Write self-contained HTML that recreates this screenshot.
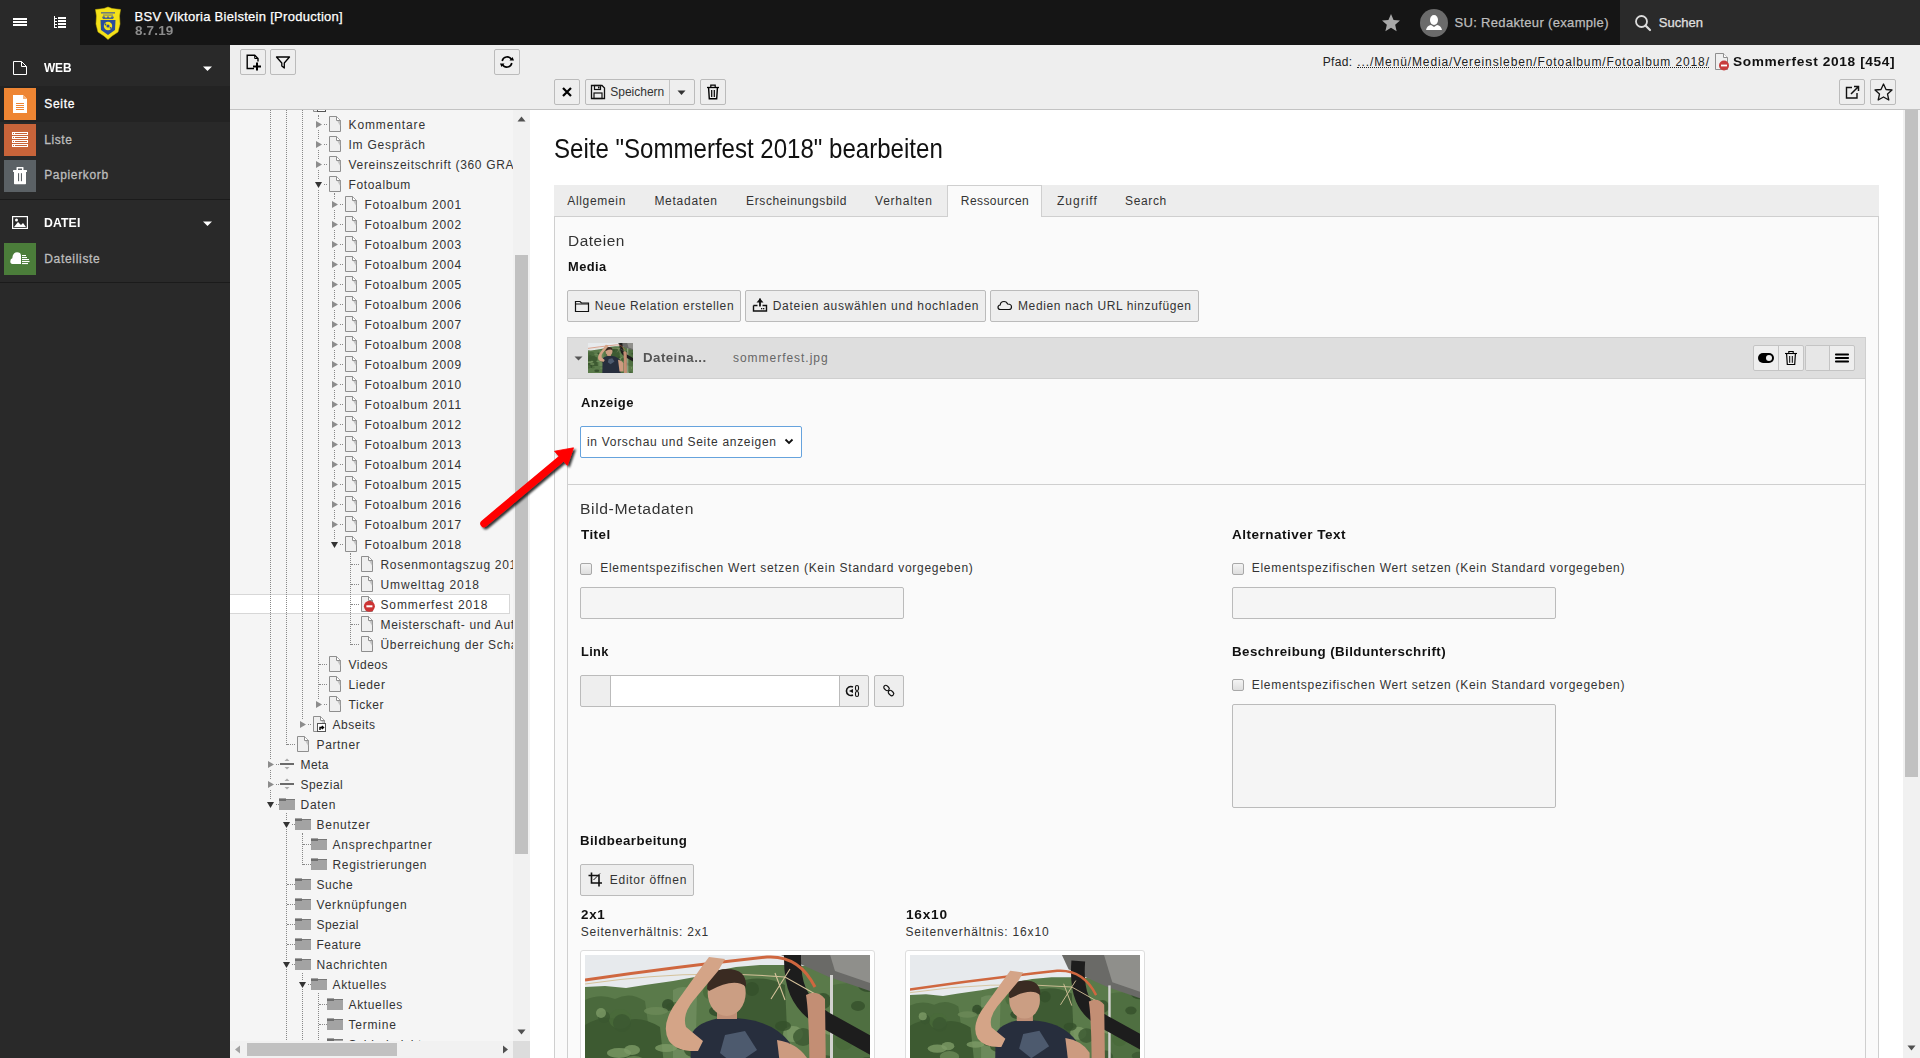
<!DOCTYPE html><html><head><meta charset="utf-8"><title>TYPO3</title><style>

*{margin:0;padding:0;box-sizing:border-box}
html,body{width:1920px;height:1058px;overflow:hidden;background:#fff;font-family:"Liberation Sans", sans-serif;}
.t{position:absolute;white-space:nowrap;}
.b{position:absolute;}
svg{position:absolute;overflow:visible}
.btn{position:absolute;background:#eee;border:1px solid #bbb;border-radius:2px;}

</style></head><body>
<div class="b" style="left:0px;top:0px;width:1920px;height:45px;background:#151515"></div>
<div class="b" style="left:0px;top:0px;width:80px;height:45px;background:#292929"></div>
<div class="b" style="left:1620px;top:0px;width:300px;height:45px;background:#2a2a2a"></div>
<svg style="left:0;top:0" width="80" height="45"><rect x="13" y="18" width="14" height="2" fill="#fff"/><rect x="13" y="21" width="14" height="2" fill="#fff"/><rect x="13" y="24" width="14" height="2" fill="#fff"/><rect x="54" y="16" width="1" height="12" fill="#fff"/><rect x="55" y="18" width="2" height="1" fill="#fff"/><rect x="58" y="17" width="8" height="2" fill="#fff"/><rect x="55" y="21" width="2" height="1" fill="#fff"/><rect x="58" y="20" width="8" height="2" fill="#fff"/><rect x="55" y="24" width="2" height="1" fill="#fff"/><rect x="58" y="23" width="8" height="2" fill="#fff"/><rect x="55" y="27" width="2" height="1" fill="#fff"/><rect x="58" y="26" width="8" height="2" fill="#fff"/></svg>
<svg style="left:95px;top:7px" width="26" height="33" viewBox="0 0 26 33"><path d="M0.5 2.5 L5 2 L9 1.5 L13 0 L17 1.5 L21 2 L25.5 2.5 L24.5 9 L25 17 L23 25 L17 29 L13 32.5 L9 29 L3 25 L1 17 L1.5 9 Z" fill="#f4e21a" stroke="#d8c000" stroke-width="0.5"/><rect x="6" y="5" width="14" height="1.6" fill="#3a55a0" opacity="0.7"/><rect x="8" y="7.5" width="10" height="1.2" fill="#3a55a0" opacity="0.6"/><path d="M7 10 L9 9 L11 11 L13 9 L15 11 L17 9 L19 10 L18 12 H8 Z" fill="#2f4fa0" opacity="0.85"/><path d="M5.5 13 H20.5 L20 23 L13 28 L6 23 Z" fill="#2a4c9c"/><circle cx="13" cy="19" r="4.2" fill="#f4e21a"/><circle cx="13" cy="19" r="1.6" fill="#2a4c9c"/><circle cx="10.5" cy="17.5" r="0.9" fill="#2a4c9c"/><circle cx="15.5" cy="20.8" r="0.9" fill="#2a4c9c"/></svg>
<div class="t " style="left:134.60px;top:8.00px;font-size:13px;line-height:17px;color:#fff;letter-spacing:0.283px;-webkit-text-stroke:0.25px #fff;">BSV Viktoria Bielstein [Production]</div>
<div class="t " style="left:134.60px;top:22.00px;font-size:13px;line-height:17px;color:#8c8c8c;letter-spacing:0.167px;font-weight:bold;transform:scaleX(1.0359);transform-origin:0 0;">8.7.19</div>
<svg style="left:1382px;top:14px" width="18" height="18" viewBox="1 1 16 16"><path d="M9 1 L11.3 6.3 L17 6.8 L12.7 10.6 L14 16.3 L9 13.3 L4 16.3 L5.3 10.6 L1 6.8 L6.7 6.3 Z" fill="#a8a8a8"/></svg>
<svg style="left:1420px;top:9px" width="28" height="28" viewBox="0 0 28 28"><circle cx="14" cy="14" r="14" fill="#6b6b6b"/><ellipse cx="14" cy="11" rx="4" ry="5" fill="#fff"/><path d="M6 21 Q7 16.5 11 16 L14 18 L17 16 Q21 16.5 22 21 Z" fill="#fff"/></svg>
<div class="t " style="left:1454.40px;top:14.20px;font-size:13px;line-height:17px;color:#bdbdbd;letter-spacing:0.338px;-webkit-text-stroke:0.25px #bdbdbd;">SU: Redakteur (example)</div>
<svg style="left:1634px;top:14px" width="18" height="18" viewBox="0 0 18 18"><circle cx="7.5" cy="7.5" r="5.5" fill="none" stroke="#ddd" stroke-width="1.8"/><path d="M11.5 11.5 L16 16" stroke="#ddd" stroke-width="2.2" stroke-linecap="round"/></svg>
<div class="t " style="left:1658.80px;top:14.20px;font-size:13px;line-height:17px;color:#e0e0e0;letter-spacing:0.022px;-webkit-text-stroke:0.25px #e0e0e0;">Suchen</div>
<div class="b" style="left:0px;top:45px;width:230px;height:1013px;background:#292929"></div>
<div class="b" style="left:0px;top:86px;width:230px;height:36px;background:#232323"></div>
<div class="b" style="left:0px;top:199px;width:230px;height:1px;background:#1b1b1b"></div>
<div class="b" style="left:0px;top:282px;width:230px;height:1px;background:#1b1b1b"></div>
<svg style="left:13px;top:61px" width="14" height="15" viewBox="0 0 14 15"><path d="M0.5 0.5 H8.5 L13.5 5.5 V13.5 H0.5 Z" fill="none" stroke="#fff" stroke-width="1"/><path d="M8.5 0.5 V5.5 H13.5" fill="none" stroke="#fff" stroke-width="1"/></svg>
<div class="t " style="left:44.20px;top:59.64px;font-size:12px;line-height:16px;color:#fff;letter-spacing:-0.101px;font-weight:bold;transform:scaleX(0.9893);transform-origin:0 0;">WEB</div>
<svg style="left:203px;top:66px" width="10" height="6"><path d="M0 0.5 L9 0.5 L4.5 5 Z" fill="#fff"/></svg>
<div class="b" style="left:4px;top:88px;width:32px;height:32px;background:#ee8533"></div>
<svg style="left:4px;top:88px" width="32" height="32" viewBox="0 0 32 32"><path d="M9 7 H19 L23 11 V25 H9 Z" fill="#fff"/><path d="M19 7 L23 11 H19 Z" fill="#f6b27a"/><rect x="12" y="15" width="8" height="1" fill="#ee8533"/><rect x="12" y="17" width="8" height="1" fill="#ee8533"/><rect x="12" y="19" width="8" height="1" fill="#ee8533"/><rect x="12" y="21" width="8" height="1" fill="#ee8533"/></svg>
<div class="t " style="left:44.20px;top:95.84px;font-size:12px;line-height:16px;color:#fff;letter-spacing:0.713px;-webkit-text-stroke:0.3px #fff;">Seite</div>
<div class="b" style="left:4px;top:124px;width:32px;height:32px;background:#c8643a"></div>
<svg style="left:4px;top:124px" width="32" height="32" viewBox="0 0 32 32"><rect x="8" y="8" width="16" height="3" fill="#fff"/><rect x="11" y="9" width="12" height="1" fill="#c8643a"/><rect x="9" y="9" width="1" height="1" fill="#c8643a"/><rect x="8" y="12" width="16" height="3" fill="#fff"/><rect x="11" y="13" width="12" height="1" fill="#c8643a"/><rect x="9" y="13" width="1" height="1" fill="#c8643a"/><rect x="8" y="16" width="16" height="3" fill="#fff"/><rect x="11" y="17" width="12" height="1" fill="#c8643a"/><rect x="9" y="17" width="1" height="1" fill="#c8643a"/><rect x="8" y="20" width="16" height="3" fill="#fff"/><rect x="11" y="21" width="12" height="1" fill="#c8643a"/><rect x="9" y="21" width="1" height="1" fill="#c8643a"/></svg>
<div class="t " style="left:44.20px;top:131.74px;font-size:12px;line-height:16px;color:#bdbdbd;letter-spacing:0.612px;-webkit-text-stroke:0.3px #bdbdbd;">Liste</div>
<div class="b" style="left:4px;top:160px;width:32px;height:32px;background:#5b6165"></div>
<svg style="left:4px;top:160px" width="32" height="32" viewBox="0 0 32 32"><rect x="9" y="10" width="14" height="2" rx="0.5" fill="#fff"/><path d="M12.5 10 V7.5 Q12.5 7 13 7 H19 Q19.5 7 19.5 7.5 V10 H18 V8.5 H14 V10 Z" fill="#fff"/><path d="M10 12 H22 V23.5 Q22 24.2 21.3 24.2 H10.7 Q10 24.2 10 23.5 Z" fill="#fff"/><rect x="14" y="13.2" width="1.1" height="8" fill="#5b6165"/><rect x="16.9" y="13.2" width="1.1" height="8" fill="#5b6165"/></svg>
<div class="t " style="left:44.20px;top:167.14px;font-size:12px;line-height:16px;color:#bdbdbd;letter-spacing:0.652px;-webkit-text-stroke:0.3px #bdbdbd;">Papierkorb</div>
<svg style="left:12px;top:216px" width="16" height="13" viewBox="0 0 16 13"><rect x="0.6" y="0.6" width="14.8" height="11.8" fill="none" stroke="#fff" stroke-width="1.2"/><path d="M2 11 L6 6 L9 9 L11 7 L14 11 Z" fill="#fff"/><circle cx="4.5" cy="4" r="1.5" fill="#fff"/></svg>
<div class="t " style="left:44.20px;top:215.04px;font-size:12px;line-height:16px;color:#fff;letter-spacing:0.117px;font-weight:bold;transform:scaleX(1.0203);transform-origin:0 0;">DATEI</div>
<svg style="left:203px;top:221px" width="10" height="6"><path d="M0 0.5 L9 0.5 L4.5 5 Z" fill="#fff"/></svg>
<div class="b" style="left:4px;top:243px;width:32px;height:32px;background:#4b7d3a"></div>
<svg style="left:4px;top:243px" width="32" height="32" viewBox="0 0 32 32"><path d="M8.5 21 Q6.3 21 6.3 18.3 Q6.3 15.8 8.3 15.3 Q8.8 9.2 13 9.2 Q16.8 9.2 17 12.5 V21 Z" fill="#fff"/><rect x="18" y="12" width="4" height="1.1" fill="#fff"/><rect x="18" y="14" width="5" height="1.1" fill="#fff"/><rect x="18" y="16" width="7" height="1.1" fill="#fff"/><rect x="18" y="18" width="7.5" height="1.1" fill="#fff"/><rect x="18" y="20" width="6" height="1.1" fill="#fff"/></svg>
<div class="t " style="left:44.20px;top:251.34px;font-size:12px;line-height:16px;color:#bdbdbd;letter-spacing:0.694px;-webkit-text-stroke:0.3px #bdbdbd;">Dateiliste</div>
<div class="b" style="left:230px;top:45px;width:300px;height:1013px;background:#f5f5f5"></div>
<div class="b" style="left:230px;top:45px;width:300px;height:65px;background:#eeeeee;border-bottom:1px solid #c3c3c3"></div>
<div class="btn" style="left:240px;top:49px;width:26px;height:26px"></div>
<div class="btn" style="left:270px;top:49px;width:26px;height:26px"></div>
<div class="btn" style="left:494px;top:49px;width:26px;height:26px"></div>
<svg style="left:246px;top:54px" width="17" height="17" viewBox="0 0 17 17"><path d="M8 14.5 H1.2 V1.2 H8.7 L12 4.5 V7.5" fill="none" stroke="#000" stroke-width="1.4"/><path d="M8.7 1.2 V4.5 H12" fill="none" stroke="#000" stroke-width="1"/><path d="M11 8.5 V16.5 M7 12.5 H15" stroke="#000" stroke-width="2"/></svg>
<svg style="left:275px;top:54px" width="16" height="16" viewBox="0 0 16 16"><path d="M1.5 3 H14.5 L9.3 9 V14 L6.8 12 V9 Z" fill="none" stroke="#000" stroke-width="1.3" stroke-linejoin="round"/></svg>
<svg style="left:499px;top:54px" width="16" height="16" viewBox="0 0 16 16"><path d="M3.2 7 A5 5 0 0 1 12.5 5.5" fill="none" stroke="#000" stroke-width="1.6"/><path d="M12.8 9 A5 5 0 0 1 3.5 10.5" fill="none" stroke="#000" stroke-width="1.6"/><path d="M10.5 6.5 L15 6.5 L13.5 3 Z" fill="#000"/><path d="M5.5 9.5 L1 9.5 L2.5 13 Z" fill="#000"/></svg>
<div class="b" style="left:230px;top:110px;width:283px;height:931px;overflow:hidden">
<div class="b" style="left:0px;top:484px;width:280px;height:20px;background:#fff;border-top:1px solid #d7d7d7;border-bottom:1px solid #d7d7d7;border-right:1px solid #d7d7d7"></div>
<div class="b" style="left:40px;top:-10px;width:1px;height:705px;border-left:1px dotted #888"></div>
<div class="b" style="left:56px;top:-10px;width:1px;height:645px;border-left:1px dotted #888"></div>
<div class="b" style="left:56px;top:703px;width:1px;height:247px;border-left:1px dotted #888"></div>
<div class="b" style="left:72px;top:-10px;width:1px;height:625px;border-left:1px dotted #888"></div>
<div class="b" style="left:72px;top:723px;width:1px;height:32px;border-left:1px dotted #888"></div>
<div class="b" style="left:72px;top:863px;width:1px;height:87px;border-left:1px dotted #888"></div>
<div class="b" style="left:88px;top:5px;width:1px;height:590px;border-left:1px dotted #888"></div>
<div class="b" style="left:88px;top:883px;width:1px;height:67px;border-left:1px dotted #888"></div>
<div class="b" style="left:104px;top:83px;width:1px;height:352px;border-left:1px dotted #888"></div>
<div class="b" style="left:120px;top:443px;width:1px;height:92px;border-left:1px dotted #888"></div>
<div class="b" style="left:73px;top:-6px;width:8px;height:1px;border-top:1px dotted #888"></div>
<svg style="left:83px;top:-14px" width="12" height="16" viewBox="0 0 12 16"><path d="M0.5 0.5 H7.5 L11.5 4.5 V15.5 H0.5 Z" fill="#efefef" stroke="#8e8e8e" stroke-width="1"/><path d="M8 4.5 H11.2 V10 Z" fill="#c4c4c4"/><path d="M7.5 0.8 V4.5 H11.2 Z" fill="#fff"/><path d="M7.5 0.5 V4.5 H11.5" fill="none" stroke="#8e8e8e" stroke-width="1"/><rect x="4.5" y="7.5" width="8" height="8" fill="#fff" stroke="#555" stroke-width="1"/><path d="M7 14 V11.5 H10 M8.8 10 L10.5 11.5 L8.8 13" fill="none" stroke="#000" stroke-width="1.4" shape-rendering="auto"/></svg>
<div class="b" style="left:93px;top:14px;width:4px;height:1px;border-top:1px dotted #888"></div>
<div class="b" style="left:84px;top:9px;width:10px;height:11px;background:#f5f5f5"></div>
<svg style="left:86px;top:11px" width="6" height="7" viewBox="0 0 6 7"><path d="M0 0 L6 3.5 L0 7 Z" fill="#8c8c8c"/></svg>
<svg style="left:99px;top:6px" width="12" height="16" viewBox="0 0 12 16"><path d="M0.5 0.5 H7.5 L11.5 4.5 V15.5 H0.5 Z" fill="#efefef" stroke="#8e8e8e" stroke-width="1"/><path d="M8 4.5 H11.2 V10 Z" fill="#c4c4c4"/><path d="M7.5 0.8 V4.5 H11.2 Z" fill="#fff"/><path d="M7.5 0.5 V4.5 H11.5" fill="none" stroke="#8e8e8e" stroke-width="1"/></svg>
<div class="t " style="left:118.50px;top:6.84px;font-size:12px;line-height:16px;color:#333;letter-spacing:0.878px;">Kommentare</div>
<div class="b" style="left:93px;top:34px;width:4px;height:1px;border-top:1px dotted #888"></div>
<div class="b" style="left:84px;top:29px;width:10px;height:11px;background:#f5f5f5"></div>
<svg style="left:86px;top:31px" width="6" height="7" viewBox="0 0 6 7"><path d="M0 0 L6 3.5 L0 7 Z" fill="#8c8c8c"/></svg>
<svg style="left:99px;top:26px" width="12" height="16" viewBox="0 0 12 16"><path d="M0.5 0.5 H7.5 L11.5 4.5 V15.5 H0.5 Z" fill="#efefef" stroke="#8e8e8e" stroke-width="1"/><path d="M8 4.5 H11.2 V10 Z" fill="#c4c4c4"/><path d="M7.5 0.8 V4.5 H11.2 Z" fill="#fff"/><path d="M7.5 0.5 V4.5 H11.5" fill="none" stroke="#8e8e8e" stroke-width="1"/></svg>
<div class="t " style="left:118.50px;top:26.84px;font-size:12px;line-height:16px;color:#333;letter-spacing:0.771px;">Im Gespräch</div>
<div class="b" style="left:93px;top:54px;width:4px;height:1px;border-top:1px dotted #888"></div>
<div class="b" style="left:84px;top:49px;width:10px;height:11px;background:#f5f5f5"></div>
<svg style="left:86px;top:51px" width="6" height="7" viewBox="0 0 6 7"><path d="M0 0 L6 3.5 L0 7 Z" fill="#8c8c8c"/></svg>
<svg style="left:99px;top:46px" width="12" height="16" viewBox="0 0 12 16"><path d="M0.5 0.5 H7.5 L11.5 4.5 V15.5 H0.5 Z" fill="#efefef" stroke="#8e8e8e" stroke-width="1"/><path d="M8 4.5 H11.2 V10 Z" fill="#c4c4c4"/><path d="M7.5 0.8 V4.5 H11.2 Z" fill="#fff"/><path d="M7.5 0.5 V4.5 H11.5" fill="none" stroke="#8e8e8e" stroke-width="1"/></svg>
<div class="t " style="left:118.50px;top:46.84px;font-size:12px;line-height:16px;color:#333;letter-spacing:0.680px;">Vereinszeitschrift (360 GRAD)</div>
<div class="b" style="left:93px;top:74px;width:4px;height:1px;border-top:1px dotted #888"></div>
<div class="b" style="left:84px;top:70px;width:10px;height:9px;background:#f5f5f5"></div>
<svg style="left:85px;top:72px" width="7" height="6" viewBox="0 0 7 6"><path d="M0 0 L7 0 L3.5 6 Z" fill="#333"/></svg>
<svg style="left:99px;top:66px" width="12" height="16" viewBox="0 0 12 16"><path d="M0.5 0.5 H7.5 L11.5 4.5 V15.5 H0.5 Z" fill="#efefef" stroke="#8e8e8e" stroke-width="1"/><path d="M8 4.5 H11.2 V10 Z" fill="#c4c4c4"/><path d="M7.5 0.8 V4.5 H11.2 Z" fill="#fff"/><path d="M7.5 0.5 V4.5 H11.5" fill="none" stroke="#8e8e8e" stroke-width="1"/></svg>
<div class="t " style="left:118.50px;top:66.84px;font-size:12px;line-height:16px;color:#333;letter-spacing:0.638px;">Fotoalbum</div>
<div class="b" style="left:109px;top:94px;width:4px;height:1px;border-top:1px dotted #888"></div>
<div class="b" style="left:100px;top:89px;width:10px;height:11px;background:#f5f5f5"></div>
<svg style="left:102px;top:91px" width="6" height="7" viewBox="0 0 6 7"><path d="M0 0 L6 3.5 L0 7 Z" fill="#8c8c8c"/></svg>
<svg style="left:115px;top:86px" width="12" height="16" viewBox="0 0 12 16"><path d="M0.5 0.5 H7.5 L11.5 4.5 V15.5 H0.5 Z" fill="#efefef" stroke="#8e8e8e" stroke-width="1"/><path d="M8 4.5 H11.2 V10 Z" fill="#c4c4c4"/><path d="M7.5 0.8 V4.5 H11.2 Z" fill="#fff"/><path d="M7.5 0.5 V4.5 H11.5" fill="none" stroke="#8e8e8e" stroke-width="1"/></svg>
<div class="t " style="left:134.50px;top:86.84px;font-size:12px;line-height:16px;color:#333;letter-spacing:0.759px;">Fotoalbum 2001</div>
<div class="b" style="left:109px;top:114px;width:4px;height:1px;border-top:1px dotted #888"></div>
<div class="b" style="left:100px;top:109px;width:10px;height:11px;background:#f5f5f5"></div>
<svg style="left:102px;top:111px" width="6" height="7" viewBox="0 0 6 7"><path d="M0 0 L6 3.5 L0 7 Z" fill="#8c8c8c"/></svg>
<svg style="left:115px;top:106px" width="12" height="16" viewBox="0 0 12 16"><path d="M0.5 0.5 H7.5 L11.5 4.5 V15.5 H0.5 Z" fill="#efefef" stroke="#8e8e8e" stroke-width="1"/><path d="M8 4.5 H11.2 V10 Z" fill="#c4c4c4"/><path d="M7.5 0.8 V4.5 H11.2 Z" fill="#fff"/><path d="M7.5 0.5 V4.5 H11.5" fill="none" stroke="#8e8e8e" stroke-width="1"/></svg>
<div class="t " style="left:134.50px;top:106.84px;font-size:12px;line-height:16px;color:#333;letter-spacing:0.759px;">Fotoalbum 2002</div>
<div class="b" style="left:109px;top:134px;width:4px;height:1px;border-top:1px dotted #888"></div>
<div class="b" style="left:100px;top:129px;width:10px;height:11px;background:#f5f5f5"></div>
<svg style="left:102px;top:131px" width="6" height="7" viewBox="0 0 6 7"><path d="M0 0 L6 3.5 L0 7 Z" fill="#8c8c8c"/></svg>
<svg style="left:115px;top:126px" width="12" height="16" viewBox="0 0 12 16"><path d="M0.5 0.5 H7.5 L11.5 4.5 V15.5 H0.5 Z" fill="#efefef" stroke="#8e8e8e" stroke-width="1"/><path d="M8 4.5 H11.2 V10 Z" fill="#c4c4c4"/><path d="M7.5 0.8 V4.5 H11.2 Z" fill="#fff"/><path d="M7.5 0.5 V4.5 H11.5" fill="none" stroke="#8e8e8e" stroke-width="1"/></svg>
<div class="t " style="left:134.50px;top:126.84px;font-size:12px;line-height:16px;color:#333;letter-spacing:0.759px;">Fotoalbum 2003</div>
<div class="b" style="left:109px;top:154px;width:4px;height:1px;border-top:1px dotted #888"></div>
<div class="b" style="left:100px;top:149px;width:10px;height:11px;background:#f5f5f5"></div>
<svg style="left:102px;top:151px" width="6" height="7" viewBox="0 0 6 7"><path d="M0 0 L6 3.5 L0 7 Z" fill="#8c8c8c"/></svg>
<svg style="left:115px;top:146px" width="12" height="16" viewBox="0 0 12 16"><path d="M0.5 0.5 H7.5 L11.5 4.5 V15.5 H0.5 Z" fill="#efefef" stroke="#8e8e8e" stroke-width="1"/><path d="M8 4.5 H11.2 V10 Z" fill="#c4c4c4"/><path d="M7.5 0.8 V4.5 H11.2 Z" fill="#fff"/><path d="M7.5 0.5 V4.5 H11.5" fill="none" stroke="#8e8e8e" stroke-width="1"/></svg>
<div class="t " style="left:134.50px;top:146.84px;font-size:12px;line-height:16px;color:#333;letter-spacing:0.759px;">Fotoalbum 2004</div>
<div class="b" style="left:109px;top:174px;width:4px;height:1px;border-top:1px dotted #888"></div>
<div class="b" style="left:100px;top:169px;width:10px;height:11px;background:#f5f5f5"></div>
<svg style="left:102px;top:171px" width="6" height="7" viewBox="0 0 6 7"><path d="M0 0 L6 3.5 L0 7 Z" fill="#8c8c8c"/></svg>
<svg style="left:115px;top:166px" width="12" height="16" viewBox="0 0 12 16"><path d="M0.5 0.5 H7.5 L11.5 4.5 V15.5 H0.5 Z" fill="#efefef" stroke="#8e8e8e" stroke-width="1"/><path d="M8 4.5 H11.2 V10 Z" fill="#c4c4c4"/><path d="M7.5 0.8 V4.5 H11.2 Z" fill="#fff"/><path d="M7.5 0.5 V4.5 H11.5" fill="none" stroke="#8e8e8e" stroke-width="1"/></svg>
<div class="t " style="left:134.50px;top:166.84px;font-size:12px;line-height:16px;color:#333;letter-spacing:0.759px;">Fotoalbum 2005</div>
<div class="b" style="left:109px;top:194px;width:4px;height:1px;border-top:1px dotted #888"></div>
<div class="b" style="left:100px;top:189px;width:10px;height:11px;background:#f5f5f5"></div>
<svg style="left:102px;top:191px" width="6" height="7" viewBox="0 0 6 7"><path d="M0 0 L6 3.5 L0 7 Z" fill="#8c8c8c"/></svg>
<svg style="left:115px;top:186px" width="12" height="16" viewBox="0 0 12 16"><path d="M0.5 0.5 H7.5 L11.5 4.5 V15.5 H0.5 Z" fill="#efefef" stroke="#8e8e8e" stroke-width="1"/><path d="M8 4.5 H11.2 V10 Z" fill="#c4c4c4"/><path d="M7.5 0.8 V4.5 H11.2 Z" fill="#fff"/><path d="M7.5 0.5 V4.5 H11.5" fill="none" stroke="#8e8e8e" stroke-width="1"/></svg>
<div class="t " style="left:134.50px;top:186.84px;font-size:12px;line-height:16px;color:#333;letter-spacing:0.759px;">Fotoalbum 2006</div>
<div class="b" style="left:109px;top:214px;width:4px;height:1px;border-top:1px dotted #888"></div>
<div class="b" style="left:100px;top:209px;width:10px;height:11px;background:#f5f5f5"></div>
<svg style="left:102px;top:211px" width="6" height="7" viewBox="0 0 6 7"><path d="M0 0 L6 3.5 L0 7 Z" fill="#8c8c8c"/></svg>
<svg style="left:115px;top:206px" width="12" height="16" viewBox="0 0 12 16"><path d="M0.5 0.5 H7.5 L11.5 4.5 V15.5 H0.5 Z" fill="#efefef" stroke="#8e8e8e" stroke-width="1"/><path d="M8 4.5 H11.2 V10 Z" fill="#c4c4c4"/><path d="M7.5 0.8 V4.5 H11.2 Z" fill="#fff"/><path d="M7.5 0.5 V4.5 H11.5" fill="none" stroke="#8e8e8e" stroke-width="1"/></svg>
<div class="t " style="left:134.50px;top:206.84px;font-size:12px;line-height:16px;color:#333;letter-spacing:0.759px;">Fotoalbum 2007</div>
<div class="b" style="left:109px;top:234px;width:4px;height:1px;border-top:1px dotted #888"></div>
<div class="b" style="left:100px;top:229px;width:10px;height:11px;background:#f5f5f5"></div>
<svg style="left:102px;top:231px" width="6" height="7" viewBox="0 0 6 7"><path d="M0 0 L6 3.5 L0 7 Z" fill="#8c8c8c"/></svg>
<svg style="left:115px;top:226px" width="12" height="16" viewBox="0 0 12 16"><path d="M0.5 0.5 H7.5 L11.5 4.5 V15.5 H0.5 Z" fill="#efefef" stroke="#8e8e8e" stroke-width="1"/><path d="M8 4.5 H11.2 V10 Z" fill="#c4c4c4"/><path d="M7.5 0.8 V4.5 H11.2 Z" fill="#fff"/><path d="M7.5 0.5 V4.5 H11.5" fill="none" stroke="#8e8e8e" stroke-width="1"/></svg>
<div class="t " style="left:134.50px;top:226.84px;font-size:12px;line-height:16px;color:#333;letter-spacing:0.759px;">Fotoalbum 2008</div>
<div class="b" style="left:109px;top:254px;width:4px;height:1px;border-top:1px dotted #888"></div>
<div class="b" style="left:100px;top:249px;width:10px;height:11px;background:#f5f5f5"></div>
<svg style="left:102px;top:251px" width="6" height="7" viewBox="0 0 6 7"><path d="M0 0 L6 3.5 L0 7 Z" fill="#8c8c8c"/></svg>
<svg style="left:115px;top:246px" width="12" height="16" viewBox="0 0 12 16"><path d="M0.5 0.5 H7.5 L11.5 4.5 V15.5 H0.5 Z" fill="#efefef" stroke="#8e8e8e" stroke-width="1"/><path d="M8 4.5 H11.2 V10 Z" fill="#c4c4c4"/><path d="M7.5 0.8 V4.5 H11.2 Z" fill="#fff"/><path d="M7.5 0.5 V4.5 H11.5" fill="none" stroke="#8e8e8e" stroke-width="1"/></svg>
<div class="t " style="left:134.50px;top:246.84px;font-size:12px;line-height:16px;color:#333;letter-spacing:0.759px;">Fotoalbum 2009</div>
<div class="b" style="left:109px;top:274px;width:4px;height:1px;border-top:1px dotted #888"></div>
<div class="b" style="left:100px;top:269px;width:10px;height:11px;background:#f5f5f5"></div>
<svg style="left:102px;top:271px" width="6" height="7" viewBox="0 0 6 7"><path d="M0 0 L6 3.5 L0 7 Z" fill="#8c8c8c"/></svg>
<svg style="left:115px;top:266px" width="12" height="16" viewBox="0 0 12 16"><path d="M0.5 0.5 H7.5 L11.5 4.5 V15.5 H0.5 Z" fill="#efefef" stroke="#8e8e8e" stroke-width="1"/><path d="M8 4.5 H11.2 V10 Z" fill="#c4c4c4"/><path d="M7.5 0.8 V4.5 H11.2 Z" fill="#fff"/><path d="M7.5 0.5 V4.5 H11.5" fill="none" stroke="#8e8e8e" stroke-width="1"/></svg>
<div class="t " style="left:134.50px;top:266.84px;font-size:12px;line-height:16px;color:#333;letter-spacing:0.759px;">Fotoalbum 2010</div>
<div class="b" style="left:109px;top:294px;width:4px;height:1px;border-top:1px dotted #888"></div>
<div class="b" style="left:100px;top:289px;width:10px;height:11px;background:#f5f5f5"></div>
<svg style="left:102px;top:291px" width="6" height="7" viewBox="0 0 6 7"><path d="M0 0 L6 3.5 L0 7 Z" fill="#8c8c8c"/></svg>
<svg style="left:115px;top:286px" width="12" height="16" viewBox="0 0 12 16"><path d="M0.5 0.5 H7.5 L11.5 4.5 V15.5 H0.5 Z" fill="#efefef" stroke="#8e8e8e" stroke-width="1"/><path d="M8 4.5 H11.2 V10 Z" fill="#c4c4c4"/><path d="M7.5 0.8 V4.5 H11.2 Z" fill="#fff"/><path d="M7.5 0.5 V4.5 H11.5" fill="none" stroke="#8e8e8e" stroke-width="1"/></svg>
<div class="t " style="left:134.50px;top:286.84px;font-size:12px;line-height:16px;color:#333;letter-spacing:0.828px;">Fotoalbum 2011</div>
<div class="b" style="left:109px;top:314px;width:4px;height:1px;border-top:1px dotted #888"></div>
<div class="b" style="left:100px;top:309px;width:10px;height:11px;background:#f5f5f5"></div>
<svg style="left:102px;top:311px" width="6" height="7" viewBox="0 0 6 7"><path d="M0 0 L6 3.5 L0 7 Z" fill="#8c8c8c"/></svg>
<svg style="left:115px;top:306px" width="12" height="16" viewBox="0 0 12 16"><path d="M0.5 0.5 H7.5 L11.5 4.5 V15.5 H0.5 Z" fill="#efefef" stroke="#8e8e8e" stroke-width="1"/><path d="M8 4.5 H11.2 V10 Z" fill="#c4c4c4"/><path d="M7.5 0.8 V4.5 H11.2 Z" fill="#fff"/><path d="M7.5 0.5 V4.5 H11.5" fill="none" stroke="#8e8e8e" stroke-width="1"/></svg>
<div class="t " style="left:134.50px;top:306.84px;font-size:12px;line-height:16px;color:#333;letter-spacing:0.759px;">Fotoalbum 2012</div>
<div class="b" style="left:109px;top:334px;width:4px;height:1px;border-top:1px dotted #888"></div>
<div class="b" style="left:100px;top:329px;width:10px;height:11px;background:#f5f5f5"></div>
<svg style="left:102px;top:331px" width="6" height="7" viewBox="0 0 6 7"><path d="M0 0 L6 3.5 L0 7 Z" fill="#8c8c8c"/></svg>
<svg style="left:115px;top:326px" width="12" height="16" viewBox="0 0 12 16"><path d="M0.5 0.5 H7.5 L11.5 4.5 V15.5 H0.5 Z" fill="#efefef" stroke="#8e8e8e" stroke-width="1"/><path d="M8 4.5 H11.2 V10 Z" fill="#c4c4c4"/><path d="M7.5 0.8 V4.5 H11.2 Z" fill="#fff"/><path d="M7.5 0.5 V4.5 H11.5" fill="none" stroke="#8e8e8e" stroke-width="1"/></svg>
<div class="t " style="left:134.50px;top:326.84px;font-size:12px;line-height:16px;color:#333;letter-spacing:0.759px;">Fotoalbum 2013</div>
<div class="b" style="left:109px;top:354px;width:4px;height:1px;border-top:1px dotted #888"></div>
<div class="b" style="left:100px;top:349px;width:10px;height:11px;background:#f5f5f5"></div>
<svg style="left:102px;top:351px" width="6" height="7" viewBox="0 0 6 7"><path d="M0 0 L6 3.5 L0 7 Z" fill="#8c8c8c"/></svg>
<svg style="left:115px;top:346px" width="12" height="16" viewBox="0 0 12 16"><path d="M0.5 0.5 H7.5 L11.5 4.5 V15.5 H0.5 Z" fill="#efefef" stroke="#8e8e8e" stroke-width="1"/><path d="M8 4.5 H11.2 V10 Z" fill="#c4c4c4"/><path d="M7.5 0.8 V4.5 H11.2 Z" fill="#fff"/><path d="M7.5 0.5 V4.5 H11.5" fill="none" stroke="#8e8e8e" stroke-width="1"/></svg>
<div class="t " style="left:134.50px;top:346.84px;font-size:12px;line-height:16px;color:#333;letter-spacing:0.759px;">Fotoalbum 2014</div>
<div class="b" style="left:109px;top:374px;width:4px;height:1px;border-top:1px dotted #888"></div>
<div class="b" style="left:100px;top:369px;width:10px;height:11px;background:#f5f5f5"></div>
<svg style="left:102px;top:371px" width="6" height="7" viewBox="0 0 6 7"><path d="M0 0 L6 3.5 L0 7 Z" fill="#8c8c8c"/></svg>
<svg style="left:115px;top:366px" width="12" height="16" viewBox="0 0 12 16"><path d="M0.5 0.5 H7.5 L11.5 4.5 V15.5 H0.5 Z" fill="#efefef" stroke="#8e8e8e" stroke-width="1"/><path d="M8 4.5 H11.2 V10 Z" fill="#c4c4c4"/><path d="M7.5 0.8 V4.5 H11.2 Z" fill="#fff"/><path d="M7.5 0.5 V4.5 H11.5" fill="none" stroke="#8e8e8e" stroke-width="1"/></svg>
<div class="t " style="left:134.50px;top:366.84px;font-size:12px;line-height:16px;color:#333;letter-spacing:0.759px;">Fotoalbum 2015</div>
<div class="b" style="left:109px;top:394px;width:4px;height:1px;border-top:1px dotted #888"></div>
<div class="b" style="left:100px;top:389px;width:10px;height:11px;background:#f5f5f5"></div>
<svg style="left:102px;top:391px" width="6" height="7" viewBox="0 0 6 7"><path d="M0 0 L6 3.5 L0 7 Z" fill="#8c8c8c"/></svg>
<svg style="left:115px;top:386px" width="12" height="16" viewBox="0 0 12 16"><path d="M0.5 0.5 H7.5 L11.5 4.5 V15.5 H0.5 Z" fill="#efefef" stroke="#8e8e8e" stroke-width="1"/><path d="M8 4.5 H11.2 V10 Z" fill="#c4c4c4"/><path d="M7.5 0.8 V4.5 H11.2 Z" fill="#fff"/><path d="M7.5 0.5 V4.5 H11.5" fill="none" stroke="#8e8e8e" stroke-width="1"/></svg>
<div class="t " style="left:134.50px;top:386.84px;font-size:12px;line-height:16px;color:#333;letter-spacing:0.759px;">Fotoalbum 2016</div>
<div class="b" style="left:109px;top:414px;width:4px;height:1px;border-top:1px dotted #888"></div>
<div class="b" style="left:100px;top:409px;width:10px;height:11px;background:#f5f5f5"></div>
<svg style="left:102px;top:411px" width="6" height="7" viewBox="0 0 6 7"><path d="M0 0 L6 3.5 L0 7 Z" fill="#8c8c8c"/></svg>
<svg style="left:115px;top:406px" width="12" height="16" viewBox="0 0 12 16"><path d="M0.5 0.5 H7.5 L11.5 4.5 V15.5 H0.5 Z" fill="#efefef" stroke="#8e8e8e" stroke-width="1"/><path d="M8 4.5 H11.2 V10 Z" fill="#c4c4c4"/><path d="M7.5 0.8 V4.5 H11.2 Z" fill="#fff"/><path d="M7.5 0.5 V4.5 H11.5" fill="none" stroke="#8e8e8e" stroke-width="1"/></svg>
<div class="t " style="left:134.50px;top:406.84px;font-size:12px;line-height:16px;color:#333;letter-spacing:0.759px;">Fotoalbum 2017</div>
<div class="b" style="left:109px;top:434px;width:4px;height:1px;border-top:1px dotted #888"></div>
<div class="b" style="left:100px;top:430px;width:10px;height:9px;background:#f5f5f5"></div>
<svg style="left:101px;top:432px" width="7" height="6" viewBox="0 0 7 6"><path d="M0 0 L7 0 L3.5 6 Z" fill="#333"/></svg>
<svg style="left:115px;top:426px" width="12" height="16" viewBox="0 0 12 16"><path d="M0.5 0.5 H7.5 L11.5 4.5 V15.5 H0.5 Z" fill="#efefef" stroke="#8e8e8e" stroke-width="1"/><path d="M8 4.5 H11.2 V10 Z" fill="#c4c4c4"/><path d="M7.5 0.8 V4.5 H11.2 Z" fill="#fff"/><path d="M7.5 0.5 V4.5 H11.5" fill="none" stroke="#8e8e8e" stroke-width="1"/></svg>
<div class="t " style="left:134.50px;top:426.84px;font-size:12px;line-height:16px;color:#333;letter-spacing:0.759px;">Fotoalbum 2018</div>
<div class="b" style="left:121px;top:454px;width:8px;height:1px;border-top:1px dotted #888"></div>
<svg style="left:131px;top:446px" width="12" height="16" viewBox="0 0 12 16"><path d="M0.5 0.5 H7.5 L11.5 4.5 V15.5 H0.5 Z" fill="#efefef" stroke="#8e8e8e" stroke-width="1"/><path d="M8 4.5 H11.2 V10 Z" fill="#c4c4c4"/><path d="M7.5 0.8 V4.5 H11.2 Z" fill="#fff"/><path d="M7.5 0.5 V4.5 H11.5" fill="none" stroke="#8e8e8e" stroke-width="1"/></svg>
<div class="t " style="left:150.50px;top:446.84px;font-size:12px;line-height:16px;color:#333;letter-spacing:0.680px;">Rosenmontagszug 2018</div>
<div class="b" style="left:121px;top:474px;width:8px;height:1px;border-top:1px dotted #888"></div>
<svg style="left:131px;top:466px" width="12" height="16" viewBox="0 0 12 16"><path d="M0.5 0.5 H7.5 L11.5 4.5 V15.5 H0.5 Z" fill="#efefef" stroke="#8e8e8e" stroke-width="1"/><path d="M8 4.5 H11.2 V10 Z" fill="#c4c4c4"/><path d="M7.5 0.8 V4.5 H11.2 Z" fill="#fff"/><path d="M7.5 0.5 V4.5 H11.5" fill="none" stroke="#8e8e8e" stroke-width="1"/></svg>
<div class="t " style="left:150.50px;top:466.84px;font-size:12px;line-height:16px;color:#333;letter-spacing:0.899px;">Umwelttag 2018</div>
<div class="b" style="left:121px;top:494px;width:8px;height:1px;border-top:1px dotted #888"></div>
<svg style="left:131px;top:486px" width="12" height="16" viewBox="0 0 12 16"><path d="M0.5 0.5 H7.5 L11.5 4.5 V15.5 H0.5 Z" fill="#efefef" stroke="#8e8e8e" stroke-width="1"/><path d="M8 4.5 H11.2 V10 Z" fill="#c4c4c4"/><path d="M7.5 0.8 V4.5 H11.2 Z" fill="#fff"/><path d="M7.5 0.5 V4.5 H11.5" fill="none" stroke="#8e8e8e" stroke-width="1"/><circle cx="8.4" cy="10.3" r="5.5" fill="#cc3434" shape-rendering="auto"/><rect x="5.4" y="9.3" width="6" height="2" fill="#fff"/></svg>
<div class="t " style="left:150.50px;top:486.84px;font-size:12px;line-height:16px;color:#333;letter-spacing:0.864px;">Sommerfest 2018</div>
<div class="b" style="left:121px;top:514px;width:8px;height:1px;border-top:1px dotted #888"></div>
<svg style="left:131px;top:506px" width="12" height="16" viewBox="0 0 12 16"><path d="M0.5 0.5 H7.5 L11.5 4.5 V15.5 H0.5 Z" fill="#efefef" stroke="#8e8e8e" stroke-width="1"/><path d="M8 4.5 H11.2 V10 Z" fill="#c4c4c4"/><path d="M7.5 0.8 V4.5 H11.2 Z" fill="#fff"/><path d="M7.5 0.5 V4.5 H11.5" fill="none" stroke="#8e8e8e" stroke-width="1"/></svg>
<div class="t " style="left:150.50px;top:506.84px;font-size:12px;line-height:16px;color:#333;letter-spacing:0.680px;">Meisterschaft- und Aufstieg</div>
<div class="b" style="left:121px;top:534px;width:8px;height:1px;border-top:1px dotted #888"></div>
<svg style="left:131px;top:526px" width="12" height="16" viewBox="0 0 12 16"><path d="M0.5 0.5 H7.5 L11.5 4.5 V15.5 H0.5 Z" fill="#efefef" stroke="#8e8e8e" stroke-width="1"/><path d="M8 4.5 H11.2 V10 Z" fill="#c4c4c4"/><path d="M7.5 0.8 V4.5 H11.2 Z" fill="#fff"/><path d="M7.5 0.5 V4.5 H11.5" fill="none" stroke="#8e8e8e" stroke-width="1"/></svg>
<div class="t " style="left:150.50px;top:526.84px;font-size:12px;line-height:16px;color:#333;letter-spacing:0.680px;">Überreichung der Schale</div>
<div class="b" style="left:89px;top:554px;width:8px;height:1px;border-top:1px dotted #888"></div>
<svg style="left:99px;top:546px" width="12" height="16" viewBox="0 0 12 16"><path d="M0.5 0.5 H7.5 L11.5 4.5 V15.5 H0.5 Z" fill="#efefef" stroke="#8e8e8e" stroke-width="1"/><path d="M8 4.5 H11.2 V10 Z" fill="#c4c4c4"/><path d="M7.5 0.8 V4.5 H11.2 Z" fill="#fff"/><path d="M7.5 0.5 V4.5 H11.5" fill="none" stroke="#8e8e8e" stroke-width="1"/></svg>
<div class="t " style="left:118.50px;top:546.84px;font-size:12px;line-height:16px;color:#333;letter-spacing:0.504px;">Videos</div>
<div class="b" style="left:89px;top:574px;width:8px;height:1px;border-top:1px dotted #888"></div>
<svg style="left:99px;top:566px" width="12" height="16" viewBox="0 0 12 16"><path d="M0.5 0.5 H7.5 L11.5 4.5 V15.5 H0.5 Z" fill="#efefef" stroke="#8e8e8e" stroke-width="1"/><path d="M8 4.5 H11.2 V10 Z" fill="#c4c4c4"/><path d="M7.5 0.8 V4.5 H11.2 Z" fill="#fff"/><path d="M7.5 0.5 V4.5 H11.5" fill="none" stroke="#8e8e8e" stroke-width="1"/></svg>
<div class="t " style="left:118.50px;top:566.84px;font-size:12px;line-height:16px;color:#333;letter-spacing:0.608px;">Lieder</div>
<div class="b" style="left:93px;top:594px;width:4px;height:1px;border-top:1px dotted #888"></div>
<div class="b" style="left:84px;top:589px;width:10px;height:11px;background:#f5f5f5"></div>
<svg style="left:86px;top:591px" width="6" height="7" viewBox="0 0 6 7"><path d="M0 0 L6 3.5 L0 7 Z" fill="#8c8c8c"/></svg>
<svg style="left:99px;top:586px" width="12" height="16" viewBox="0 0 12 16"><path d="M0.5 0.5 H7.5 L11.5 4.5 V15.5 H0.5 Z" fill="#efefef" stroke="#8e8e8e" stroke-width="1"/><path d="M8 4.5 H11.2 V10 Z" fill="#c4c4c4"/><path d="M7.5 0.8 V4.5 H11.2 Z" fill="#fff"/><path d="M7.5 0.5 V4.5 H11.5" fill="none" stroke="#8e8e8e" stroke-width="1"/></svg>
<div class="t " style="left:118.50px;top:586.84px;font-size:12px;line-height:16px;color:#333;letter-spacing:0.576px;">Ticker</div>
<div class="b" style="left:77px;top:614px;width:4px;height:1px;border-top:1px dotted #888"></div>
<div class="b" style="left:68px;top:609px;width:10px;height:11px;background:#f5f5f5"></div>
<svg style="left:70px;top:611px" width="6" height="7" viewBox="0 0 6 7"><path d="M0 0 L6 3.5 L0 7 Z" fill="#8c8c8c"/></svg>
<svg style="left:83px;top:606px" width="12" height="16" viewBox="0 0 12 16"><path d="M0.5 0.5 H7.5 L11.5 4.5 V15.5 H0.5 Z" fill="#efefef" stroke="#8e8e8e" stroke-width="1"/><path d="M8 4.5 H11.2 V10 Z" fill="#c4c4c4"/><path d="M7.5 0.8 V4.5 H11.2 Z" fill="#fff"/><path d="M7.5 0.5 V4.5 H11.5" fill="none" stroke="#8e8e8e" stroke-width="1"/><rect x="4.5" y="7.5" width="8" height="8" fill="#fff" stroke="#555" stroke-width="1"/><path d="M7 14 V11.5 H10 M8.8 10 L10.5 11.5 L8.8 13" fill="none" stroke="#000" stroke-width="1.4" shape-rendering="auto"/></svg>
<div class="t " style="left:102.50px;top:606.84px;font-size:12px;line-height:16px;color:#333;letter-spacing:0.542px;">Abseits</div>
<div class="b" style="left:57px;top:634px;width:8px;height:1px;border-top:1px dotted #888"></div>
<svg style="left:67px;top:626px" width="12" height="16" viewBox="0 0 12 16"><path d="M0.5 0.5 H7.5 L11.5 4.5 V15.5 H0.5 Z" fill="#efefef" stroke="#8e8e8e" stroke-width="1"/><path d="M8 4.5 H11.2 V10 Z" fill="#c4c4c4"/><path d="M7.5 0.8 V4.5 H11.2 Z" fill="#fff"/><path d="M7.5 0.5 V4.5 H11.5" fill="none" stroke="#8e8e8e" stroke-width="1"/></svg>
<div class="t " style="left:86.50px;top:626.84px;font-size:12px;line-height:16px;color:#333;letter-spacing:0.642px;">Partner</div>
<div class="b" style="left:45px;top:654px;width:4px;height:1px;border-top:1px dotted #888"></div>
<div class="b" style="left:36px;top:649px;width:10px;height:11px;background:#f5f5f5"></div>
<svg style="left:38px;top:651px" width="6" height="7" viewBox="0 0 6 7"><path d="M0 0 L6 3.5 L0 7 Z" fill="#8c8c8c"/></svg>
<svg style="left:50px;top:647px" width="14" height="14" viewBox="0 0 14 14"><rect x="0" y="6" width="14" height="2" fill="#6b6b6b"/><path d="M4.5 4 L7 1.5 L9.5 4 Z" fill="#aaa"/><path d="M4.5 10 L7 12.5 L9.5 10 Z" fill="#aaa"/></svg>
<div class="t " style="left:70.50px;top:646.84px;font-size:12px;line-height:16px;color:#333;letter-spacing:0.407px;">Meta</div>
<div class="b" style="left:45px;top:674px;width:4px;height:1px;border-top:1px dotted #888"></div>
<div class="b" style="left:36px;top:669px;width:10px;height:11px;background:#f5f5f5"></div>
<svg style="left:38px;top:671px" width="6" height="7" viewBox="0 0 6 7"><path d="M0 0 L6 3.5 L0 7 Z" fill="#8c8c8c"/></svg>
<svg style="left:50px;top:667px" width="14" height="14" viewBox="0 0 14 14"><rect x="0" y="6" width="14" height="2" fill="#6b6b6b"/><path d="M4.5 4 L7 1.5 L9.5 4 Z" fill="#aaa"/><path d="M4.5 10 L7 12.5 L9.5 10 Z" fill="#aaa"/></svg>
<div class="t " style="left:70.50px;top:666.84px;font-size:12px;line-height:16px;color:#333;letter-spacing:0.473px;">Spezial</div>
<div class="b" style="left:45px;top:694px;width:4px;height:1px;border-top:1px dotted #888"></div>
<div class="b" style="left:36px;top:690px;width:10px;height:9px;background:#f5f5f5"></div>
<svg style="left:37px;top:692px" width="7" height="6" viewBox="0 0 7 6"><path d="M0 0 L7 0 L3.5 6 Z" fill="#333"/></svg>
<svg style="left:49px;top:688px" width="16" height="12" viewBox="0 0 16 12" shape-rendering="crispEdges"><path d="M0 0 H6 L7 1 H16 V12 H0 Z" fill="#a3a3a3"/><rect x="0" y="1" width="7" height="2" fill="#6e6e6e"/><rect x="7" y="1" width="9" height="1" fill="#777"/></svg>
<div class="t " style="left:70.50px;top:686.84px;font-size:12px;line-height:16px;color:#333;letter-spacing:0.720px;">Daten</div>
<div class="b" style="left:61px;top:714px;width:4px;height:1px;border-top:1px dotted #888"></div>
<div class="b" style="left:52px;top:710px;width:10px;height:9px;background:#f5f5f5"></div>
<svg style="left:53px;top:712px" width="7" height="6" viewBox="0 0 7 6"><path d="M0 0 L7 0 L3.5 6 Z" fill="#333"/></svg>
<svg style="left:65px;top:708px" width="16" height="12" viewBox="0 0 16 12" shape-rendering="crispEdges"><path d="M0 0 H6 L7 1 H16 V12 H0 Z" fill="#a3a3a3"/><rect x="0" y="1" width="7" height="2" fill="#6e6e6e"/><rect x="7" y="1" width="9" height="1" fill="#777"/></svg>
<div class="t " style="left:86.50px;top:706.84px;font-size:12px;line-height:16px;color:#333;letter-spacing:0.739px;">Benutzer</div>
<div class="b" style="left:73px;top:734px;width:8px;height:1px;border-top:1px dotted #888"></div>
<svg style="left:81px;top:728px" width="16" height="12" viewBox="0 0 16 12" shape-rendering="crispEdges"><path d="M0 0 H6 L7 1 H16 V12 H0 Z" fill="#a3a3a3"/><rect x="0" y="1" width="7" height="2" fill="#6e6e6e"/><rect x="7" y="1" width="9" height="1" fill="#777"/></svg>
<div class="t " style="left:102.50px;top:726.84px;font-size:12px;line-height:16px;color:#333;letter-spacing:0.749px;">Ansprechpartner</div>
<div class="b" style="left:73px;top:754px;width:8px;height:1px;border-top:1px dotted #888"></div>
<svg style="left:81px;top:748px" width="16" height="12" viewBox="0 0 16 12" shape-rendering="crispEdges"><path d="M0 0 H6 L7 1 H16 V12 H0 Z" fill="#a3a3a3"/><rect x="0" y="1" width="7" height="2" fill="#6e6e6e"/><rect x="7" y="1" width="9" height="1" fill="#777"/></svg>
<div class="t " style="left:102.50px;top:746.84px;font-size:12px;line-height:16px;color:#333;letter-spacing:0.663px;">Registrierungen</div>
<div class="b" style="left:57px;top:774px;width:8px;height:1px;border-top:1px dotted #888"></div>
<svg style="left:65px;top:768px" width="16" height="12" viewBox="0 0 16 12" shape-rendering="crispEdges"><path d="M0 0 H6 L7 1 H16 V12 H0 Z" fill="#a3a3a3"/><rect x="0" y="1" width="7" height="2" fill="#6e6e6e"/><rect x="7" y="1" width="9" height="1" fill="#777"/></svg>
<div class="t " style="left:86.50px;top:766.84px;font-size:12px;line-height:16px;color:#333;letter-spacing:0.518px;">Suche</div>
<div class="b" style="left:57px;top:794px;width:8px;height:1px;border-top:1px dotted #888"></div>
<svg style="left:65px;top:788px" width="16" height="12" viewBox="0 0 16 12" shape-rendering="crispEdges"><path d="M0 0 H6 L7 1 H16 V12 H0 Z" fill="#a3a3a3"/><rect x="0" y="1" width="7" height="2" fill="#6e6e6e"/><rect x="7" y="1" width="9" height="1" fill="#777"/></svg>
<div class="t " style="left:86.50px;top:786.84px;font-size:12px;line-height:16px;color:#333;letter-spacing:0.788px;">Verknüpfungen</div>
<div class="b" style="left:57px;top:814px;width:8px;height:1px;border-top:1px dotted #888"></div>
<svg style="left:65px;top:808px" width="16" height="12" viewBox="0 0 16 12" shape-rendering="crispEdges"><path d="M0 0 H6 L7 1 H16 V12 H0 Z" fill="#a3a3a3"/><rect x="0" y="1" width="7" height="2" fill="#6e6e6e"/><rect x="7" y="1" width="9" height="1" fill="#777"/></svg>
<div class="t " style="left:86.50px;top:806.84px;font-size:12px;line-height:16px;color:#333;letter-spacing:0.423px;">Spezial</div>
<div class="b" style="left:57px;top:834px;width:8px;height:1px;border-top:1px dotted #888"></div>
<svg style="left:65px;top:828px" width="16" height="12" viewBox="0 0 16 12" shape-rendering="crispEdges"><path d="M0 0 H6 L7 1 H16 V12 H0 Z" fill="#a3a3a3"/><rect x="0" y="1" width="7" height="2" fill="#6e6e6e"/><rect x="7" y="1" width="9" height="1" fill="#777"/></svg>
<div class="t " style="left:86.50px;top:826.84px;font-size:12px;line-height:16px;color:#333;letter-spacing:0.523px;">Feature</div>
<div class="b" style="left:61px;top:854px;width:4px;height:1px;border-top:1px dotted #888"></div>
<div class="b" style="left:52px;top:850px;width:10px;height:9px;background:#f5f5f5"></div>
<svg style="left:53px;top:852px" width="7" height="6" viewBox="0 0 7 6"><path d="M0 0 L7 0 L3.5 6 Z" fill="#333"/></svg>
<svg style="left:65px;top:848px" width="16" height="12" viewBox="0 0 16 12" shape-rendering="crispEdges"><path d="M0 0 H6 L7 1 H16 V12 H0 Z" fill="#a3a3a3"/><rect x="0" y="1" width="7" height="2" fill="#6e6e6e"/><rect x="7" y="1" width="9" height="1" fill="#777"/></svg>
<div class="t " style="left:86.50px;top:846.84px;font-size:12px;line-height:16px;color:#333;letter-spacing:0.667px;">Nachrichten</div>
<div class="b" style="left:77px;top:874px;width:4px;height:1px;border-top:1px dotted #888"></div>
<div class="b" style="left:68px;top:870px;width:10px;height:9px;background:#f5f5f5"></div>
<svg style="left:69px;top:872px" width="7" height="6" viewBox="0 0 7 6"><path d="M0 0 L7 0 L3.5 6 Z" fill="#333"/></svg>
<svg style="left:81px;top:868px" width="16" height="12" viewBox="0 0 16 12" shape-rendering="crispEdges"><path d="M0 0 H6 L7 1 H16 V12 H0 Z" fill="#a3a3a3"/><rect x="0" y="1" width="7" height="2" fill="#6e6e6e"/><rect x="7" y="1" width="9" height="1" fill="#777"/></svg>
<div class="t " style="left:102.50px;top:866.84px;font-size:12px;line-height:16px;color:#333;letter-spacing:0.639px;">Aktuelles</div>
<div class="b" style="left:89px;top:894px;width:8px;height:1px;border-top:1px dotted #888"></div>
<svg style="left:97px;top:888px" width="16" height="12" viewBox="0 0 16 12" shape-rendering="crispEdges"><path d="M0 0 H6 L7 1 H16 V12 H0 Z" fill="#a3a3a3"/><rect x="0" y="1" width="7" height="2" fill="#6e6e6e"/><rect x="7" y="1" width="9" height="1" fill="#777"/></svg>
<div class="t " style="left:118.50px;top:886.84px;font-size:12px;line-height:16px;color:#333;letter-spacing:0.639px;">Aktuelles</div>
<div class="b" style="left:89px;top:914px;width:8px;height:1px;border-top:1px dotted #888"></div>
<svg style="left:97px;top:908px" width="16" height="12" viewBox="0 0 16 12" shape-rendering="crispEdges"><path d="M0 0 H6 L7 1 H16 V12 H0 Z" fill="#a3a3a3"/><rect x="0" y="1" width="7" height="2" fill="#6e6e6e"/><rect x="7" y="1" width="9" height="1" fill="#777"/></svg>
<div class="t " style="left:118.50px;top:906.84px;font-size:12px;line-height:16px;color:#333;letter-spacing:0.787px;">Termine</div>
<div class="b" style="left:89px;top:934px;width:8px;height:1px;border-top:1px dotted #888"></div>
<svg style="left:97px;top:928px" width="16" height="12" viewBox="0 0 16 12" shape-rendering="crispEdges"><path d="M0 0 H6 L7 1 H16 V12 H0 Z" fill="#a3a3a3"/><rect x="0" y="1" width="7" height="2" fill="#6e6e6e"/><rect x="7" y="1" width="9" height="1" fill="#777"/></svg>
<div class="t " style="left:118.50px;top:926.84px;font-size:12px;line-height:16px;color:#333;letter-spacing:0.680px;">Schiedsrichter</div>
</div>
<div class="b" style="left:513px;top:110px;width:17px;height:931px;background:#f1f1f1"></div>
<div class="b" style="left:515px;top:255px;width:13px;height:599px;background:#c1c1c1"></div>
<svg style="left:517px;top:116px" width="10" height="6"><path d="M0.5 5.5 L8.5 5.5 L4.5 0.5 Z" fill="#505050"/></svg>
<svg style="left:517px;top:1029px" width="10" height="6"><path d="M0.5 0.5 L8.5 0.5 L4.5 5.5 Z" fill="#505050"/></svg>
<div class="b" style="left:230px;top:1041px;width:283px;height:17px;background:#f1f1f1"></div>
<div class="b" style="left:247px;top:1043px;width:150px;height:13px;background:#c1c1c1"></div>
<div class="b" style="left:513px;top:1041px;width:17px;height:17px;background:#dcdcdc"></div>
<svg style="left:234px;top:1045px" width="7" height="10"><path d="M6 0.5 L6 8.5 L1 4.5 Z" fill="#a3a3a3"/></svg>
<svg style="left:502px;top:1045px" width="7" height="10"><path d="M1 0.5 L1 8.5 L6 4.5 Z" fill="#505050"/></svg>
<div class="b" style="left:530px;top:45px;width:1390px;height:65px;background:#eeeeee;border-bottom:1px solid #c3c3c3"></div>
<div class="t " style="left:1322.70px;top:53.64px;font-size:12px;line-height:16px;color:#222;letter-spacing:0.370px;">Pfad:</div>
<div class="t " style="left:1357.30px;top:53.64px;font-size:12px;line-height:16px;color:#222;letter-spacing:0.888px;">.../Menü/Media/Vereinsleben/Fotoalbum/Fotoalbum 2018/</div>
<div class="b" style="left:1357px;top:67px;width:352px;height:1px;border-top:1px dotted #222"></div>
<svg style="left:1715px;top:53px" width="15" height="17" viewBox="0 0 15 17"><path d="M0.5 0.5 H8.5 L12.5 4.5 V16.5 H0.5 Z" fill="#efefef" stroke="#8e8e8e"/><path d="M8.5 0.5 V4.5 H12.5" fill="#fff" stroke="#8e8e8e"/><circle cx="9" cy="12.5" r="5" fill="#c83c3c"/><rect x="6" y="11.6" width="6" height="1.8" fill="#fff"/></svg>
<div class="t " style="left:1733.40px;top:53.64px;font-size:12px;line-height:16px;color:#111;letter-spacing:0.541px;font-weight:bold;transform:scaleX(1.1416);transform-origin:0 0;">Sommerfest 2018 [454]</div>
<div class="btn" style="left:554px;top:79px;width:26px;height:26px"></div>
<div class="btn" style="left:585px;top:79px;width:110px;height:26px"></div>
<div class="b" style="left:669px;top:80px;width:1px;height:24px;background:#c4c4c4"></div>
<div class="btn" style="left:700px;top:79px;width:26px;height:26px"></div>
<div class="btn" style="left:1839px;top:79px;width:26px;height:26px"></div>
<div class="btn" style="left:1870px;top:79px;width:26px;height:26px"></div>
<svg style="left:561px;top:86px" width="12" height="12" viewBox="0 0 12 12"><path d="M2 2 L10 10 M10 2 L2 10" stroke="#000" stroke-width="2.2"/></svg>
<svg style="left:590px;top:84px" width="16" height="16" viewBox="0 0 16 16"><path d="M1.5 1.5 H12 L14.5 4 V14.5 H1.5 Z" fill="none" stroke="#111" stroke-width="1.3"/><rect x="4.5" y="1.5" width="6" height="4" fill="none" stroke="#111" stroke-width="1.2"/><rect x="8" y="2.5" width="1.5" height="2" fill="#111"/><rect x="4" y="9" width="8" height="5.5" fill="none" stroke="#111" stroke-width="1.2"/></svg>
<div class="t " style="left:610.30px;top:84.04px;font-size:12px;line-height:16px;color:#333;letter-spacing:-0.017px;">Speichern</div>
<svg style="left:677px;top:90px" width="10" height="6"><path d="M0.5 0.5 L8.5 0.5 L4.5 5 Z" fill="#333"/></svg>
<svg style="left:706px;top:84px" width="14" height="16" viewBox="0 0 14 16"><path d="M1 3.5 H13" stroke="#000" stroke-width="1.3"/><path d="M4.8 3.2 V1.2 H9.2 V3.2" fill="none" stroke="#000" stroke-width="1.2"/><path d="M2.6 4 L3.3 14.8 H10.7 L11.4 4" fill="none" stroke="#000" stroke-width="1.4"/><rect x="5.1" y="6" width="1.2" height="7" fill="#000"/><rect x="7.7" y="6" width="1.2" height="7" fill="#000"/></svg>
<svg style="left:1845px;top:85px" width="15" height="15" viewBox="0 0 15 15"><path d="M7 2.5 H1.5 V13 H12 V8" fill="none" stroke="#111" stroke-width="1.4"/><path d="M6 9 L13 2 M9 1.5 H13.5 V6" fill="none" stroke="#111" stroke-width="1.5"/></svg>
<svg style="left:1874px;top:83px" width="19" height="18" viewBox="0 0 19 18"><path d="M9.5 1 L12 6.5 L18 7 L13.5 11 L14.8 17 L9.5 14 L4.2 17 L5.5 11 L1 7 L7 6.5 Z" fill="none" stroke="#111" stroke-width="1.3" stroke-linejoin="round"/></svg>
<div class="b" style="left:530px;top:110px;width:1373px;height:948px;background:#fff"></div>
<div class="b" style="left:1903px;top:110px;width:17px;height:948px;background:#f1f1f1"></div>
<div class="b" style="left:1905px;top:110px;width:13px;height:667px;background:#c1c1c1"></div>
<svg style="left:1907px;top:1045px" width="10" height="6"><path d="M0.5 0.5 L8.5 0.5 L4.5 5.5 Z" fill="#505050"/></svg>
<div class="t" style="left:553.5px;top:132.4px;font-size:28px;line-height:34px;color:#111;transform:scaleX(0.859);transform-origin:0 0;letter-spacing:0px">Seite "Sommerfest 2018" bearbeiten</div>
<div class="b" style="left:554px;top:185px;width:1325px;height:32px;background:#ededed;border-bottom:1px solid #cfcfcf"></div>
<div class="b" style="left:947px;top:185px;width:95px;height:32px;background:#fafafa;border:1px solid #cfcfcf;border-bottom:none"></div>
<div class="t " style="left:567.30px;top:193.04px;font-size:12px;line-height:16px;color:#333;letter-spacing:0.664px;">Allgemein</div>
<div class="t " style="left:654.40px;top:193.04px;font-size:12px;line-height:16px;color:#333;letter-spacing:0.736px;">Metadaten</div>
<div class="t " style="left:746.10px;top:193.04px;font-size:12px;line-height:16px;color:#333;letter-spacing:0.594px;">Erscheinungsbild</div>
<div class="t " style="left:875.00px;top:193.04px;font-size:12px;line-height:16px;color:#333;letter-spacing:0.786px;">Verhalten</div>
<div class="t " style="left:960.80px;top:193.04px;font-size:12px;line-height:16px;color:#333;letter-spacing:0.430px;">Ressourcen</div>
<div class="t " style="left:1057.00px;top:193.04px;font-size:12px;line-height:16px;color:#333;letter-spacing:0.997px;">Zugriff</div>
<div class="t " style="left:1125.00px;top:193.04px;font-size:12px;line-height:16px;color:#333;letter-spacing:0.636px;">Search</div>
<div class="b" style="left:554px;top:217px;width:1325px;height:850px;background:#fafafa;border:1px solid #cfcfcf;border-top:none"></div>
<div class="t " style="left:567.80px;top:231.95px;font-size:14px;line-height:18px;color:#333;letter-spacing:0.493px;transform:scaleX(1.1013);transform-origin:0 0;">Dateien</div>
<div class="t " style="left:567.80px;top:258.84px;font-size:12px;line-height:16px;color:#111;letter-spacing:0.384px;font-weight:bold;transform:scaleX(1.0725);transform-origin:0 0;">Media</div>
<div class="btn" style="left:567px;top:290px;width:174px;height:32px"></div>
<div class="btn" style="left:745px;top:290px;width:241px;height:32px"></div>
<div class="btn" style="left:990px;top:290px;width:209px;height:32px"></div>
<svg style="left:574px;top:299px" width="16" height="14" viewBox="0 0 16 14"><path d="M1.5 2.5 H6 L7.5 4 H14.5 V12.5 H1.5 Z" fill="none" stroke="#111" stroke-width="1.2"/><path d="M1.5 5 H14.5" stroke="#111" stroke-width="1"/></svg>
<div class="t " style="left:594.70px;top:298.44px;font-size:12px;line-height:16px;color:#333;letter-spacing:0.644px;">Neue Relation erstellen</div>
<svg style="left:752px;top:297px" width="16" height="16" viewBox="0 0 16 16"><path d="M8 1.5 V9.5" stroke="#111" stroke-width="1.8"/><path d="M4.5 5.5 L8 1.5 L11.5 5.5 Z" fill="#111"/><path d="M1.5 8.5 V14 H14.5 V8.5 H10.5 M5.5 8.5 H1.5" fill="none" stroke="#111" stroke-width="1.4"/><rect x="11" y="11" width="1.3" height="1.3" fill="#111"/><rect x="9" y="11" width="1.3" height="1.3" fill="#111"/></svg>
<div class="t " style="left:772.70px;top:298.44px;font-size:12px;line-height:16px;color:#333;letter-spacing:0.722px;">Dateien auswählen und hochladen</div>
<svg style="left:997px;top:299px" width="16" height="12" viewBox="0 0 16 12"><path d="M3.5 10.5 Q1 10.5 1 8.3 Q1 6.3 3.2 6 Q3.5 2.5 7 2.5 Q9.8 2.5 10.6 5 Q14.5 5 14.5 8 Q14.5 10.5 12 10.5 Z" fill="none" stroke="#111" stroke-width="1.2"/></svg>
<div class="t " style="left:1018.00px;top:298.44px;font-size:12px;line-height:16px;color:#333;letter-spacing:0.614px;">Medien nach URL hinzufügen</div>
<div class="b" style="left:567px;top:337px;width:1299px;height:730px;background:#fafafa;border:1px solid #cfcfcf;border-bottom:none"></div>
<div class="b" style="left:567px;top:337px;width:1299px;height:42px;background:#dedede;border:1px solid #cfcfcf"></div>
<svg style="left:574px;top:356px" width="9" height="5"><path d="M0.5 0.5 L8.5 0.5 L4.5 4.5 Z" fill="#555"/></svg>
<svg style="left:588px;top:343px;overflow:hidden" width="45" height="30" viewBox="0 0 45 30"><g transform="translate(-4.5 1.5) scale(0.18)"><rect x="-50" y="-50" width="400" height="250" fill="#e7eaed"/><path d="M0 32 L20 31 L41 33 L60 30 L88 26 L110 22 L130 16 L151 12 L175 10 L200 10 L285 14 V200 H0 Z" fill="#5a7a4a"/><path d="M0 45 Q15 38 30 44 Q45 36 60 46 L70 120 H0 Z" fill="#4a693c"/><path d="M0 70 Q20 58 40 66 Q55 60 75 72 L80 120 H0 Z" fill="#3d5a31"/><path d="M150 28 Q175 18 200 30 L204 120 H150 Z" fill="#3e5b33"/><path d="M88 35 Q100 28 112 38 L110 120 H88 Z" fill="#6c8a5b"/><path d="M248 30 Q270 25 285 35 V120 H248 Z" fill="#4f6f41"/><ellipse cx="92" cy="51" rx="11" ry="4" fill="#486a3a" opacity="0.8"/><ellipse cx="27" cy="127" rx="13" ry="5" fill="#3b5731" opacity="0.8"/><ellipse cx="124" cy="37" rx="6" ry="7" fill="#486a3a" opacity="0.8"/><ellipse cx="35" cy="64" rx="11" ry="10" fill="#486a3a" opacity="0.8"/><ellipse cx="167" cy="34" rx="7" ry="7" fill="#34502b" opacity="0.8"/><ellipse cx="83" cy="50" rx="6" ry="6" fill="#2f4a28" opacity="0.8"/><ellipse cx="52" cy="127" rx="11" ry="6" fill="#486a3a" opacity="0.8"/><ellipse cx="203" cy="124" rx="11" ry="7" fill="#486a3a" opacity="0.8"/><ellipse cx="122" cy="80" rx="10" ry="7" fill="#6b8a58" opacity="0.8"/><ellipse cx="71" cy="56" rx="12" ry="4" fill="#6b8a58" opacity="0.8"/><ellipse cx="150" cy="178" rx="12" ry="6" fill="#3b5731" opacity="0.8"/><ellipse cx="34" cy="98" rx="12" ry="5" fill="#7d9b66" opacity="0.8"/><ellipse cx="120" cy="193" rx="6" ry="7" fill="#6b8a58" opacity="0.8"/><ellipse cx="97" cy="86" rx="9" ry="9" fill="#3b5731" opacity="0.8"/><ellipse cx="239" cy="190" rx="9" ry="8" fill="#3b5731" opacity="0.8"/><ellipse cx="208" cy="79" rx="10" ry="8" fill="#7d9b66" opacity="0.8"/><ellipse cx="81" cy="93" rx="11" ry="4" fill="#7d9b66" opacity="0.8"/><ellipse cx="101" cy="132" rx="9" ry="5" fill="#6b8a58" opacity="0.8"/><ellipse cx="37" cy="68" rx="9" ry="9" fill="#3b5731" opacity="0.8"/><ellipse cx="47" cy="95" rx="8" ry="5" fill="#7d9b66" opacity="0.8"/><ellipse cx="246" cy="74" rx="9" ry="6" fill="#7d9b66" opacity="0.8"/><ellipse cx="273" cy="51" rx="7" ry="5" fill="#34502b" opacity="0.8"/><ellipse cx="3" cy="170" rx="7" ry="6" fill="#34502b" opacity="0.8"/><ellipse cx="119" cy="90" rx="10" ry="10" fill="#2f4a28" opacity="0.8"/><ellipse cx="245" cy="191" rx="11" ry="8" fill="#7d9b66" opacity="0.8"/><ellipse cx="256" cy="161" rx="13" ry="9" fill="#7d9b66" opacity="0.8"/><ellipse cx="113" cy="94" rx="9" ry="6" fill="#34502b" opacity="0.8"/><ellipse cx="19" cy="62" rx="6" ry="6" fill="#3b5731" opacity="0.8"/><ellipse cx="29" cy="124" rx="10" ry="10" fill="#486a3a" opacity="0.8"/><ellipse cx="7" cy="178" rx="11" ry="5" fill="#6b8a58" opacity="0.8"/><ellipse cx="272" cy="130" rx="9" ry="5" fill="#7d9b66" opacity="0.8"/><ellipse cx="283" cy="107" rx="9" ry="5" fill="#3b5731" opacity="0.8"/><ellipse cx="214" cy="155" rx="9" ry="8" fill="#486a3a" opacity="0.8"/><ellipse cx="7" cy="191" rx="10" ry="5" fill="#486a3a" opacity="0.8"/><ellipse cx="261" cy="158" rx="8" ry="8" fill="#3b5731" opacity="0.8"/><ellipse cx="198" cy="71" rx="8" ry="5" fill="#34502b" opacity="0.8"/><ellipse cx="152" cy="161" rx="8" ry="5" fill="#34502b" opacity="0.8"/><ellipse cx="230" cy="168" rx="12" ry="5" fill="#486a3a" opacity="0.8"/><ellipse cx="140" cy="153" rx="14" ry="9" fill="#7d9b66" opacity="0.8"/><ellipse cx="74" cy="146" rx="14" ry="7" fill="#2f4a28" opacity="0.8"/><ellipse cx="282" cy="192" rx="8" ry="5" fill="#34502b" opacity="0.8"/><ellipse cx="134" cy="84" rx="9" ry="10" fill="#486a3a" opacity="0.8"/><ellipse cx="240" cy="109" rx="11" ry="9" fill="#3b5731" opacity="0.8"/><ellipse cx="238" cy="46" rx="8" ry="8" fill="#34502b" opacity="0.8"/><ellipse cx="136" cy="56" rx="12" ry="6" fill="#2f4a28" opacity="0.8"/><ellipse cx="113" cy="95" rx="14" ry="8" fill="#34502b" opacity="0.8"/><ellipse cx="283" cy="30" rx="10" ry="7" fill="#2f4a28" opacity="0.8"/><ellipse cx="42" cy="170" rx="14" ry="8" fill="#6b8a58" opacity="0.8"/><ellipse cx="44" cy="121" rx="5" ry="9" fill="#2f4a28" opacity="0.8"/><ellipse cx="185" cy="117" rx="13" ry="7" fill="#34502b" opacity="0.8"/><ellipse cx="235" cy="62" rx="7" ry="6" fill="#34502b" opacity="0.8"/><ellipse cx="218" cy="82" rx="10" ry="9" fill="#3b5731" opacity="0.8"/><ellipse cx="259" cy="87" rx="9" ry="8" fill="#486a3a" opacity="0.8"/><ellipse cx="120" cy="186" rx="10" ry="7" fill="#486a3a" opacity="0.8"/><ellipse cx="146" cy="178" rx="12" ry="8" fill="#34502b" opacity="0.8"/><ellipse cx="49" cy="108" rx="12" ry="7" fill="#6b8a58" opacity="0.8"/><ellipse cx="194" cy="118" rx="9" ry="9" fill="#486a3a" opacity="0.8"/><ellipse cx="16" cy="58" rx="5" ry="5" fill="#7d9b66" opacity="0.8"/><ellipse cx="160" cy="158" rx="13" ry="7" fill="#486a3a" opacity="0.8"/><ellipse cx="277" cy="131" rx="7" ry="6" fill="#486a3a" opacity="0.8"/><path d="M182 -30 H285 V36 L244 22 L213 8 L196 0 Z" fill="#6a6a67"/><path d="M236 -30 H285 V28 L250 16 Z" fill="#8f8f8b"/><rect x="245" y="20" width="3" height="180" fill="#d2d2cf"/><path d="M208 -10 C205 30 214 50 240 65 L330 115" fill="none" stroke="#1d1d1d" stroke-width="17"/><path d="M0 25 Q90 12 182 2 Q214 0 230 32" fill="none" stroke="#cf673f" stroke-width="3"/><path d="M0 29 Q100 14 200 22 L232 40 M190 18 L200 45 M205 14 L186 44" fill="none" stroke="#d5c29a" stroke-width="1.1"/><path d="M104 200 L106 80 Q112 66 140 62 L160 64 Q190 68 205 88 L207 200 Z" fill="#272e3d"/><path d="M140 80 L160 76 L172 95 L150 110 L135 98 Z" fill="#4d5a6e"/><path d="M192 85 Q212 88 222 103 L222 150 L200 150 Z" fill="#cc9b80"/><path d="M221 40 Q232 34 240 44 L242 200 L224 200 Q226 70 221 40 Z" fill="#c38e74"/><rect x="132" y="52" width="20" height="12" fill="#bf8f76"/><ellipse cx="141.7" cy="38" rx="19" ry="23" fill="#cb9e83"/><path d="M122 34 Q122 14 142 14 Q162 14 161 32 Q150 22 124 36 Z" fill="#3a2b22"/><path d="M124 2 L140 4 L133 16 L108 46 Q97 60 101 72 L118 86 L113 96 Q92 97 84 86 Q76 72 88 52 L118 10 Z" fill="#d4a487"/></g></svg>
<div class="t " style="left:643.40px;top:350.14px;font-size:12px;line-height:16px;color:#555;letter-spacing:0.391px;font-weight:bold;transform:scaleX(1.1097);transform-origin:0 0;">Dateina...</div>
<div class="t " style="left:733.00px;top:350.14px;font-size:12px;line-height:16px;color:#666;letter-spacing:0.967px;">sommerfest.jpg</div>
<div class="b" style="left:1753px;top:345px;width:51px;height:26px;background:#eee;border:1px solid #c4c4c4;border-radius:2px"></div>
<div class="b" style="left:1805px;top:345px;width:50px;height:26px;background:#eee;border:1px solid #c4c4c4;border-radius:2px"></div>
<div class="b" style="left:1806px;top:346px;width:23px;height:24px;background:#e7e7e7"></div>
<div class="b" style="left:1778px;top:346px;width:1px;height:24px;background:#c4c4c4"></div>
<div class="b" style="left:1829px;top:346px;width:1px;height:24px;background:#c4c4c4"></div>
<svg style="left:1757px;top:350px" width="18" height="16" viewBox="0 0 18 16"><rect x="1" y="3" width="16" height="10" rx="5" fill="#000"/><circle cx="12" cy="8" r="3" fill="#eee"/></svg>
<svg style="left:1784px;top:350px" width="14" height="16" viewBox="0 0 14 16"><path d="M1 3.5 H13" stroke="#000" stroke-width="1.1"/><path d="M4.8 3.2 V1.5 H9.2 V3.2" fill="none" stroke="#000" stroke-width="1.1"/><path d="M2.6 4 L3.3 14.5 H10.7 L11.4 4" fill="none" stroke="#000" stroke-width="1.2"/><rect x="5.2" y="6" width="1" height="6.8" fill="#000"/><rect x="7.8" y="6" width="1" height="6.8" fill="#000"/></svg>
<svg style="left:1835px;top:353px" width="15" height="10" viewBox="0 0 15 10"><rect x="0" y="0.5" width="14" height="2" rx="0.8" fill="#000"/><rect x="0" y="4" width="14" height="2" rx="0.8" fill="#000"/><rect x="0" y="7.5" width="14" height="2" rx="0.8" fill="#000"/></svg>
<div class="t " style="left:580.70px;top:395.14px;font-size:12px;line-height:16px;color:#111;letter-spacing:0.393px;font-weight:bold;transform:scaleX(1.0833);transform-origin:0 0;">Anzeige</div>
<div class="b" style="left:580px;top:426px;width:222px;height:32px;background:#fff;border:1px solid #66a3dd;border-radius:2px"></div>
<div class="t " style="left:587.00px;top:434.14px;font-size:12px;line-height:16px;color:#333;letter-spacing:0.697px;">in Vorschau und Seite anzeigen</div>
<svg style="left:784px;top:438px" width="10" height="7" viewBox="0 0 10 7"><path d="M1.5 1.5 L5 5 L8.5 1.5" fill="none" stroke="#111" stroke-width="1.8"/></svg>
<div class="b" style="left:568px;top:484px;width:1297px;height:1px;background:#cfcfcf"></div>
<div class="t " style="left:580.00px;top:500.05px;font-size:14px;line-height:18px;color:#333;letter-spacing:0.527px;transform:scaleX(1.1226);transform-origin:0 0;">Bild-Metadaten</div>
<div class="t " style="left:580.70px;top:527.34px;font-size:12px;line-height:16px;color:#111;letter-spacing:0.417px;font-weight:bold;transform:scaleX(1.1141);transform-origin:0 0;">Titel</div>
<div class="t " style="left:1231.90px;top:527.24px;font-size:12px;line-height:16px;color:#111;letter-spacing:0.439px;font-weight:bold;transform:scaleX(1.1266);transform-origin:0 0;">Alternativer Text</div>
<div class="b" style="left:580px;top:563px;width:12px;height:12px;background:linear-gradient(#f4f4f4,#dedede);border:1px solid #a8a8a8;border-radius:2px"></div>
<div class="b" style="left:1232px;top:563px;width:12px;height:12px;background:linear-gradient(#f4f4f4,#dedede);border:1px solid #a8a8a8;border-radius:2px"></div>
<div class="b" style="left:1232px;top:679px;width:12px;height:12px;background:linear-gradient(#f4f4f4,#dedede);border:1px solid #a8a8a8;border-radius:2px"></div>
<div class="t " style="left:600.20px;top:559.94px;font-size:12px;line-height:16px;color:#333;letter-spacing:0.725px;">Elementspezifischen Wert setzen (Kein Standard vorgegeben)</div>
<div class="t " style="left:1251.70px;top:559.94px;font-size:12px;line-height:16px;color:#333;letter-spacing:0.728px;">Elementspezifischen Wert setzen (Kein Standard vorgegeben)</div>
<div class="b" style="left:580px;top:587px;width:324px;height:32px;background:#f5f5f5;border:1px solid #bbb;border-radius:2px"></div>
<div class="b" style="left:1232px;top:587px;width:324px;height:32px;background:#f5f5f5;border:1px solid #bbb;border-radius:2px"></div>
<div class="t " style="left:580.70px;top:644.24px;font-size:12px;line-height:16px;color:#111;letter-spacing:0.328px;font-weight:bold;transform:scaleX(1.0637);transform-origin:0 0;">Link</div>
<div class="t " style="left:1231.90px;top:644.24px;font-size:12px;line-height:16px;color:#111;letter-spacing:0.396px;font-weight:bold;transform:scaleX(1.1093);transform-origin:0 0;">Beschreibung (Bildunterschrift)</div>
<div class="b" style="left:580px;top:675px;width:31px;height:32px;background:#eee;border:1px solid #bbb;border-radius:2px 0 0 2px"></div>
<div class="b" style="left:610px;top:675px;width:230px;height:32px;background:#fff;border:1px solid #bbb"></div>
<div class="b" style="left:839px;top:675px;width:30px;height:32px;background:#eee;border:1px solid #bbb;border-radius:0 2px 2px 0"></div>
<div class="b" style="left:874px;top:675px;width:30px;height:32px;background:#eee;border:1px solid #bbb;border-radius:2px"></div>
<svg style="left:846px;top:684px" width="16" height="14" viewBox="0 0 16 14"><path d="M7 3 A4.5 4.5 0 1 0 7 11" fill="none" stroke="#111" stroke-width="1.6"/><path d="M3 7 L7 5 L7 9 Z" fill="#111"/><rect x="9.5" y="1.5" width="3" height="5" rx="1.5" fill="none" stroke="#111" stroke-width="1.1"/><rect x="9.5" y="7.5" width="3" height="5" rx="1.5" fill="none" stroke="#111" stroke-width="1.1"/></svg>
<svg style="left:882px;top:684px" width="14" height="14" viewBox="0 0 14 14"><rect x="1.5" y="2" width="6" height="4" rx="2" transform="rotate(45 4.5 4)" fill="none" stroke="#111" stroke-width="1.2"/><rect x="6" y="7" width="6" height="4" rx="2" transform="rotate(45 9 9)" fill="none" stroke="#111" stroke-width="1.2"/></svg>
<div class="t " style="left:1251.70px;top:677.44px;font-size:12px;line-height:16px;color:#333;letter-spacing:0.728px;">Elementspezifischen Wert setzen (Kein Standard vorgegeben)</div>
<div class="b" style="left:1232px;top:704px;width:324px;height:104px;background:#f5f5f5;border:1px solid #bbb;border-radius:2px"></div>
<div class="t " style="left:580.20px;top:833.34px;font-size:12px;line-height:16px;color:#111;letter-spacing:0.401px;font-weight:bold;transform:scaleX(1.1016);transform-origin:0 0;">Bildbearbeitung</div>
<div class="btn" style="left:580px;top:864px;width:114px;height:32px"></div>
<svg style="left:588px;top:872px" width="15" height="15" viewBox="0 0 15 15"><path d="M3.5 0.5 V11 H14" fill="none" stroke="#111" stroke-width="1.6"/><path d="M0.5 3.5 H11 V14.5" fill="none" stroke="#111" stroke-width="1.6"/><path d="M12 1.5 L5.5 8" stroke="#111" stroke-width="1"/></svg>
<div class="t " style="left:609.80px;top:872.34px;font-size:12px;line-height:16px;color:#333;letter-spacing:0.723px;">Editor öffnen</div>
<div class="t " style="left:580.70px;top:906.64px;font-size:12px;line-height:16px;color:#111;letter-spacing:0.679px;font-weight:bold;transform:scaleX(1.1133);transform-origin:0 0;">2x1</div>
<div class="t " style="left:905.50px;top:906.64px;font-size:12px;line-height:16px;color:#111;letter-spacing:0.679px;font-weight:bold;transform:scaleX(1.1390);transform-origin:0 0;">16x10</div>
<div class="t " style="left:580.70px;top:924.34px;font-size:12px;line-height:16px;color:#333;letter-spacing:0.805px;">Seitenverhältnis: 2x1</div>
<div class="t " style="left:905.50px;top:924.34px;font-size:12px;line-height:16px;color:#333;letter-spacing:0.834px;">Seitenverhältnis: 16x10</div>
<div class="b" style="left:580px;top:950px;width:295px;height:120px;background:#fff;border:1px solid #ddd;border-radius:3px"></div>
<svg style="left:585px;top:955px;overflow:hidden" width="285" height="110" viewBox="0 0 285 110"><rect x="-50" y="-50" width="400" height="250" fill="#e7eaed"/><path d="M0 32 L20 31 L41 33 L60 30 L88 26 L110 22 L130 16 L151 12 L175 10 L200 10 L285 14 V200 H0 Z" fill="#5a7a4a"/><path d="M0 45 Q15 38 30 44 Q45 36 60 46 L70 120 H0 Z" fill="#4a693c"/><path d="M0 70 Q20 58 40 66 Q55 60 75 72 L80 120 H0 Z" fill="#3d5a31"/><path d="M150 28 Q175 18 200 30 L204 120 H150 Z" fill="#3e5b33"/><path d="M88 35 Q100 28 112 38 L110 120 H88 Z" fill="#6c8a5b"/><path d="M248 30 Q270 25 285 35 V120 H248 Z" fill="#4f6f41"/><ellipse cx="92" cy="51" rx="11" ry="4" fill="#486a3a" opacity="0.8"/><ellipse cx="27" cy="127" rx="13" ry="5" fill="#3b5731" opacity="0.8"/><ellipse cx="124" cy="37" rx="6" ry="7" fill="#486a3a" opacity="0.8"/><ellipse cx="35" cy="64" rx="11" ry="10" fill="#486a3a" opacity="0.8"/><ellipse cx="167" cy="34" rx="7" ry="7" fill="#34502b" opacity="0.8"/><ellipse cx="83" cy="50" rx="6" ry="6" fill="#2f4a28" opacity="0.8"/><ellipse cx="52" cy="127" rx="11" ry="6" fill="#486a3a" opacity="0.8"/><ellipse cx="203" cy="124" rx="11" ry="7" fill="#486a3a" opacity="0.8"/><ellipse cx="122" cy="80" rx="10" ry="7" fill="#6b8a58" opacity="0.8"/><ellipse cx="71" cy="56" rx="12" ry="4" fill="#6b8a58" opacity="0.8"/><ellipse cx="150" cy="178" rx="12" ry="6" fill="#3b5731" opacity="0.8"/><ellipse cx="34" cy="98" rx="12" ry="5" fill="#7d9b66" opacity="0.8"/><ellipse cx="120" cy="193" rx="6" ry="7" fill="#6b8a58" opacity="0.8"/><ellipse cx="97" cy="86" rx="9" ry="9" fill="#3b5731" opacity="0.8"/><ellipse cx="239" cy="190" rx="9" ry="8" fill="#3b5731" opacity="0.8"/><ellipse cx="208" cy="79" rx="10" ry="8" fill="#7d9b66" opacity="0.8"/><ellipse cx="81" cy="93" rx="11" ry="4" fill="#7d9b66" opacity="0.8"/><ellipse cx="101" cy="132" rx="9" ry="5" fill="#6b8a58" opacity="0.8"/><ellipse cx="37" cy="68" rx="9" ry="9" fill="#3b5731" opacity="0.8"/><ellipse cx="47" cy="95" rx="8" ry="5" fill="#7d9b66" opacity="0.8"/><ellipse cx="246" cy="74" rx="9" ry="6" fill="#7d9b66" opacity="0.8"/><ellipse cx="273" cy="51" rx="7" ry="5" fill="#34502b" opacity="0.8"/><ellipse cx="3" cy="170" rx="7" ry="6" fill="#34502b" opacity="0.8"/><ellipse cx="119" cy="90" rx="10" ry="10" fill="#2f4a28" opacity="0.8"/><ellipse cx="245" cy="191" rx="11" ry="8" fill="#7d9b66" opacity="0.8"/><ellipse cx="256" cy="161" rx="13" ry="9" fill="#7d9b66" opacity="0.8"/><ellipse cx="113" cy="94" rx="9" ry="6" fill="#34502b" opacity="0.8"/><ellipse cx="19" cy="62" rx="6" ry="6" fill="#3b5731" opacity="0.8"/><ellipse cx="29" cy="124" rx="10" ry="10" fill="#486a3a" opacity="0.8"/><ellipse cx="7" cy="178" rx="11" ry="5" fill="#6b8a58" opacity="0.8"/><ellipse cx="272" cy="130" rx="9" ry="5" fill="#7d9b66" opacity="0.8"/><ellipse cx="283" cy="107" rx="9" ry="5" fill="#3b5731" opacity="0.8"/><ellipse cx="214" cy="155" rx="9" ry="8" fill="#486a3a" opacity="0.8"/><ellipse cx="7" cy="191" rx="10" ry="5" fill="#486a3a" opacity="0.8"/><ellipse cx="261" cy="158" rx="8" ry="8" fill="#3b5731" opacity="0.8"/><ellipse cx="198" cy="71" rx="8" ry="5" fill="#34502b" opacity="0.8"/><ellipse cx="152" cy="161" rx="8" ry="5" fill="#34502b" opacity="0.8"/><ellipse cx="230" cy="168" rx="12" ry="5" fill="#486a3a" opacity="0.8"/><ellipse cx="140" cy="153" rx="14" ry="9" fill="#7d9b66" opacity="0.8"/><ellipse cx="74" cy="146" rx="14" ry="7" fill="#2f4a28" opacity="0.8"/><ellipse cx="282" cy="192" rx="8" ry="5" fill="#34502b" opacity="0.8"/><ellipse cx="134" cy="84" rx="9" ry="10" fill="#486a3a" opacity="0.8"/><ellipse cx="240" cy="109" rx="11" ry="9" fill="#3b5731" opacity="0.8"/><ellipse cx="238" cy="46" rx="8" ry="8" fill="#34502b" opacity="0.8"/><ellipse cx="136" cy="56" rx="12" ry="6" fill="#2f4a28" opacity="0.8"/><ellipse cx="113" cy="95" rx="14" ry="8" fill="#34502b" opacity="0.8"/><ellipse cx="283" cy="30" rx="10" ry="7" fill="#2f4a28" opacity="0.8"/><ellipse cx="42" cy="170" rx="14" ry="8" fill="#6b8a58" opacity="0.8"/><ellipse cx="44" cy="121" rx="5" ry="9" fill="#2f4a28" opacity="0.8"/><ellipse cx="185" cy="117" rx="13" ry="7" fill="#34502b" opacity="0.8"/><ellipse cx="235" cy="62" rx="7" ry="6" fill="#34502b" opacity="0.8"/><ellipse cx="218" cy="82" rx="10" ry="9" fill="#3b5731" opacity="0.8"/><ellipse cx="259" cy="87" rx="9" ry="8" fill="#486a3a" opacity="0.8"/><ellipse cx="120" cy="186" rx="10" ry="7" fill="#486a3a" opacity="0.8"/><ellipse cx="146" cy="178" rx="12" ry="8" fill="#34502b" opacity="0.8"/><ellipse cx="49" cy="108" rx="12" ry="7" fill="#6b8a58" opacity="0.8"/><ellipse cx="194" cy="118" rx="9" ry="9" fill="#486a3a" opacity="0.8"/><ellipse cx="16" cy="58" rx="5" ry="5" fill="#7d9b66" opacity="0.8"/><ellipse cx="160" cy="158" rx="13" ry="7" fill="#486a3a" opacity="0.8"/><ellipse cx="277" cy="131" rx="7" ry="6" fill="#486a3a" opacity="0.8"/><path d="M182 -30 H285 V36 L244 22 L213 8 L196 0 Z" fill="#6a6a67"/><path d="M236 -30 H285 V28 L250 16 Z" fill="#8f8f8b"/><rect x="245" y="20" width="3" height="180" fill="#d2d2cf"/><path d="M208 -10 C205 30 214 50 240 65 L330 115" fill="none" stroke="#1d1d1d" stroke-width="17"/><path d="M0 25 Q90 12 182 2 Q214 0 230 32" fill="none" stroke="#cf673f" stroke-width="3"/><path d="M0 29 Q100 14 200 22 L232 40 M190 18 L200 45 M205 14 L186 44" fill="none" stroke="#d5c29a" stroke-width="1.1"/><path d="M104 200 L106 80 Q112 66 140 62 L160 64 Q190 68 205 88 L207 200 Z" fill="#272e3d"/><path d="M140 80 L160 76 L172 95 L150 110 L135 98 Z" fill="#4d5a6e"/><path d="M192 85 Q212 88 222 103 L222 150 L200 150 Z" fill="#cc9b80"/><path d="M221 40 Q232 34 240 44 L242 200 L224 200 Q226 70 221 40 Z" fill="#c38e74"/><rect x="132" y="52" width="20" height="12" fill="#bf8f76"/><ellipse cx="141.7" cy="38" rx="19" ry="23" fill="#cb9e83"/><path d="M122 34 Q122 14 142 14 Q162 14 161 32 Q150 22 124 36 Z" fill="#3a2b22"/><path d="M124 2 L140 4 L133 16 L108 46 Q97 60 101 72 L118 86 L113 96 Q92 97 84 86 Q76 72 88 52 L118 10 Z" fill="#d4a487"/></svg>
<div class="b" style="left:905px;top:950px;width:240px;height:120px;background:#fff;border:1px solid #ddd;border-radius:3px"></div>
<svg style="left:910px;top:955px;overflow:hidden" width="230" height="110" viewBox="0 0 230 110"><rect width="230" height="110" fill="#e7eaed"/><g transform="translate(-0.2 14.2) scale(0.81)"><rect x="-50" y="-50" width="400" height="250" fill="#e7eaed"/><path d="M0 32 L20 31 L41 33 L60 30 L88 26 L110 22 L130 16 L151 12 L175 10 L200 10 L285 14 V200 H0 Z" fill="#5a7a4a"/><path d="M0 45 Q15 38 30 44 Q45 36 60 46 L70 120 H0 Z" fill="#4a693c"/><path d="M0 70 Q20 58 40 66 Q55 60 75 72 L80 120 H0 Z" fill="#3d5a31"/><path d="M150 28 Q175 18 200 30 L204 120 H150 Z" fill="#3e5b33"/><path d="M88 35 Q100 28 112 38 L110 120 H88 Z" fill="#6c8a5b"/><path d="M248 30 Q270 25 285 35 V120 H248 Z" fill="#4f6f41"/><ellipse cx="92" cy="51" rx="11" ry="4" fill="#486a3a" opacity="0.8"/><ellipse cx="27" cy="127" rx="13" ry="5" fill="#3b5731" opacity="0.8"/><ellipse cx="124" cy="37" rx="6" ry="7" fill="#486a3a" opacity="0.8"/><ellipse cx="35" cy="64" rx="11" ry="10" fill="#486a3a" opacity="0.8"/><ellipse cx="167" cy="34" rx="7" ry="7" fill="#34502b" opacity="0.8"/><ellipse cx="83" cy="50" rx="6" ry="6" fill="#2f4a28" opacity="0.8"/><ellipse cx="52" cy="127" rx="11" ry="6" fill="#486a3a" opacity="0.8"/><ellipse cx="203" cy="124" rx="11" ry="7" fill="#486a3a" opacity="0.8"/><ellipse cx="122" cy="80" rx="10" ry="7" fill="#6b8a58" opacity="0.8"/><ellipse cx="71" cy="56" rx="12" ry="4" fill="#6b8a58" opacity="0.8"/><ellipse cx="150" cy="178" rx="12" ry="6" fill="#3b5731" opacity="0.8"/><ellipse cx="34" cy="98" rx="12" ry="5" fill="#7d9b66" opacity="0.8"/><ellipse cx="120" cy="193" rx="6" ry="7" fill="#6b8a58" opacity="0.8"/><ellipse cx="97" cy="86" rx="9" ry="9" fill="#3b5731" opacity="0.8"/><ellipse cx="239" cy="190" rx="9" ry="8" fill="#3b5731" opacity="0.8"/><ellipse cx="208" cy="79" rx="10" ry="8" fill="#7d9b66" opacity="0.8"/><ellipse cx="81" cy="93" rx="11" ry="4" fill="#7d9b66" opacity="0.8"/><ellipse cx="101" cy="132" rx="9" ry="5" fill="#6b8a58" opacity="0.8"/><ellipse cx="37" cy="68" rx="9" ry="9" fill="#3b5731" opacity="0.8"/><ellipse cx="47" cy="95" rx="8" ry="5" fill="#7d9b66" opacity="0.8"/><ellipse cx="246" cy="74" rx="9" ry="6" fill="#7d9b66" opacity="0.8"/><ellipse cx="273" cy="51" rx="7" ry="5" fill="#34502b" opacity="0.8"/><ellipse cx="3" cy="170" rx="7" ry="6" fill="#34502b" opacity="0.8"/><ellipse cx="119" cy="90" rx="10" ry="10" fill="#2f4a28" opacity="0.8"/><ellipse cx="245" cy="191" rx="11" ry="8" fill="#7d9b66" opacity="0.8"/><ellipse cx="256" cy="161" rx="13" ry="9" fill="#7d9b66" opacity="0.8"/><ellipse cx="113" cy="94" rx="9" ry="6" fill="#34502b" opacity="0.8"/><ellipse cx="19" cy="62" rx="6" ry="6" fill="#3b5731" opacity="0.8"/><ellipse cx="29" cy="124" rx="10" ry="10" fill="#486a3a" opacity="0.8"/><ellipse cx="7" cy="178" rx="11" ry="5" fill="#6b8a58" opacity="0.8"/><ellipse cx="272" cy="130" rx="9" ry="5" fill="#7d9b66" opacity="0.8"/><ellipse cx="283" cy="107" rx="9" ry="5" fill="#3b5731" opacity="0.8"/><ellipse cx="214" cy="155" rx="9" ry="8" fill="#486a3a" opacity="0.8"/><ellipse cx="7" cy="191" rx="10" ry="5" fill="#486a3a" opacity="0.8"/><ellipse cx="261" cy="158" rx="8" ry="8" fill="#3b5731" opacity="0.8"/><ellipse cx="198" cy="71" rx="8" ry="5" fill="#34502b" opacity="0.8"/><ellipse cx="152" cy="161" rx="8" ry="5" fill="#34502b" opacity="0.8"/><ellipse cx="230" cy="168" rx="12" ry="5" fill="#486a3a" opacity="0.8"/><ellipse cx="140" cy="153" rx="14" ry="9" fill="#7d9b66" opacity="0.8"/><ellipse cx="74" cy="146" rx="14" ry="7" fill="#2f4a28" opacity="0.8"/><ellipse cx="282" cy="192" rx="8" ry="5" fill="#34502b" opacity="0.8"/><ellipse cx="134" cy="84" rx="9" ry="10" fill="#486a3a" opacity="0.8"/><ellipse cx="240" cy="109" rx="11" ry="9" fill="#3b5731" opacity="0.8"/><ellipse cx="238" cy="46" rx="8" ry="8" fill="#34502b" opacity="0.8"/><ellipse cx="136" cy="56" rx="12" ry="6" fill="#2f4a28" opacity="0.8"/><ellipse cx="113" cy="95" rx="14" ry="8" fill="#34502b" opacity="0.8"/><ellipse cx="283" cy="30" rx="10" ry="7" fill="#2f4a28" opacity="0.8"/><ellipse cx="42" cy="170" rx="14" ry="8" fill="#6b8a58" opacity="0.8"/><ellipse cx="44" cy="121" rx="5" ry="9" fill="#2f4a28" opacity="0.8"/><ellipse cx="185" cy="117" rx="13" ry="7" fill="#34502b" opacity="0.8"/><ellipse cx="235" cy="62" rx="7" ry="6" fill="#34502b" opacity="0.8"/><ellipse cx="218" cy="82" rx="10" ry="9" fill="#3b5731" opacity="0.8"/><ellipse cx="259" cy="87" rx="9" ry="8" fill="#486a3a" opacity="0.8"/><ellipse cx="120" cy="186" rx="10" ry="7" fill="#486a3a" opacity="0.8"/><ellipse cx="146" cy="178" rx="12" ry="8" fill="#34502b" opacity="0.8"/><ellipse cx="49" cy="108" rx="12" ry="7" fill="#6b8a58" opacity="0.8"/><ellipse cx="194" cy="118" rx="9" ry="9" fill="#486a3a" opacity="0.8"/><ellipse cx="16" cy="58" rx="5" ry="5" fill="#7d9b66" opacity="0.8"/><ellipse cx="160" cy="158" rx="13" ry="7" fill="#486a3a" opacity="0.8"/><ellipse cx="277" cy="131" rx="7" ry="6" fill="#486a3a" opacity="0.8"/><path d="M182 -30 H285 V36 L244 22 L213 8 L196 0 Z" fill="#6a6a67"/><path d="M236 -30 H285 V28 L250 16 Z" fill="#8f8f8b"/><rect x="245" y="20" width="3" height="180" fill="#d2d2cf"/><path d="M208 -10 C205 30 214 50 240 65 L330 115" fill="none" stroke="#1d1d1d" stroke-width="17"/><path d="M0 25 Q90 12 182 2 Q214 0 230 32" fill="none" stroke="#cf673f" stroke-width="3"/><path d="M0 29 Q100 14 200 22 L232 40 M190 18 L200 45 M205 14 L186 44" fill="none" stroke="#d5c29a" stroke-width="1.1"/><path d="M104 200 L106 80 Q112 66 140 62 L160 64 Q190 68 205 88 L207 200 Z" fill="#272e3d"/><path d="M140 80 L160 76 L172 95 L150 110 L135 98 Z" fill="#4d5a6e"/><path d="M192 85 Q212 88 222 103 L222 150 L200 150 Z" fill="#cc9b80"/><path d="M221 40 Q232 34 240 44 L242 200 L224 200 Q226 70 221 40 Z" fill="#c38e74"/><rect x="132" y="52" width="20" height="12" fill="#bf8f76"/><ellipse cx="141.7" cy="38" rx="19" ry="23" fill="#cb9e83"/><path d="M122 34 Q122 14 142 14 Q162 14 161 32 Q150 22 124 36 Z" fill="#3a2b22"/><path d="M124 2 L140 4 L133 16 L108 46 Q97 60 101 72 L118 86 L113 96 Q92 97 84 86 Q76 72 88 52 L118 10 Z" fill="#d4a487"/></g></svg>
<svg style="left:0;top:0" width="1" height="1" viewBox="0 0 1 1"><defs><filter id="sh" x="-20%" y="-20%" width="140%" height="140%"><feGaussianBlur in="SourceAlpha" stdDeviation="1.2"/><feOffset dx="2" dy="2"/><feComponentTransfer><feFuncA type="linear" slope="0.8"/></feComponentTransfer><feMerge><feMergeNode/><feMergeNode in="SourceGraphic"/></feMerge></filter></defs></svg>
<svg style="left:0;top:0" width="1920" height="1058" viewBox="0 0 1920 1058"><g filter="url(#sh)"><path d="M484 523.5 L561 459" stroke="#ff0000" stroke-width="7.5" stroke-linecap="round"/><path d="M573.5 447.8 L554.5 451.2 L567.3 465.3 Z" fill="#ff0000" stroke="#ff0000" stroke-width="0.8" stroke-linejoin="round"/></g></svg>
</body></html>
